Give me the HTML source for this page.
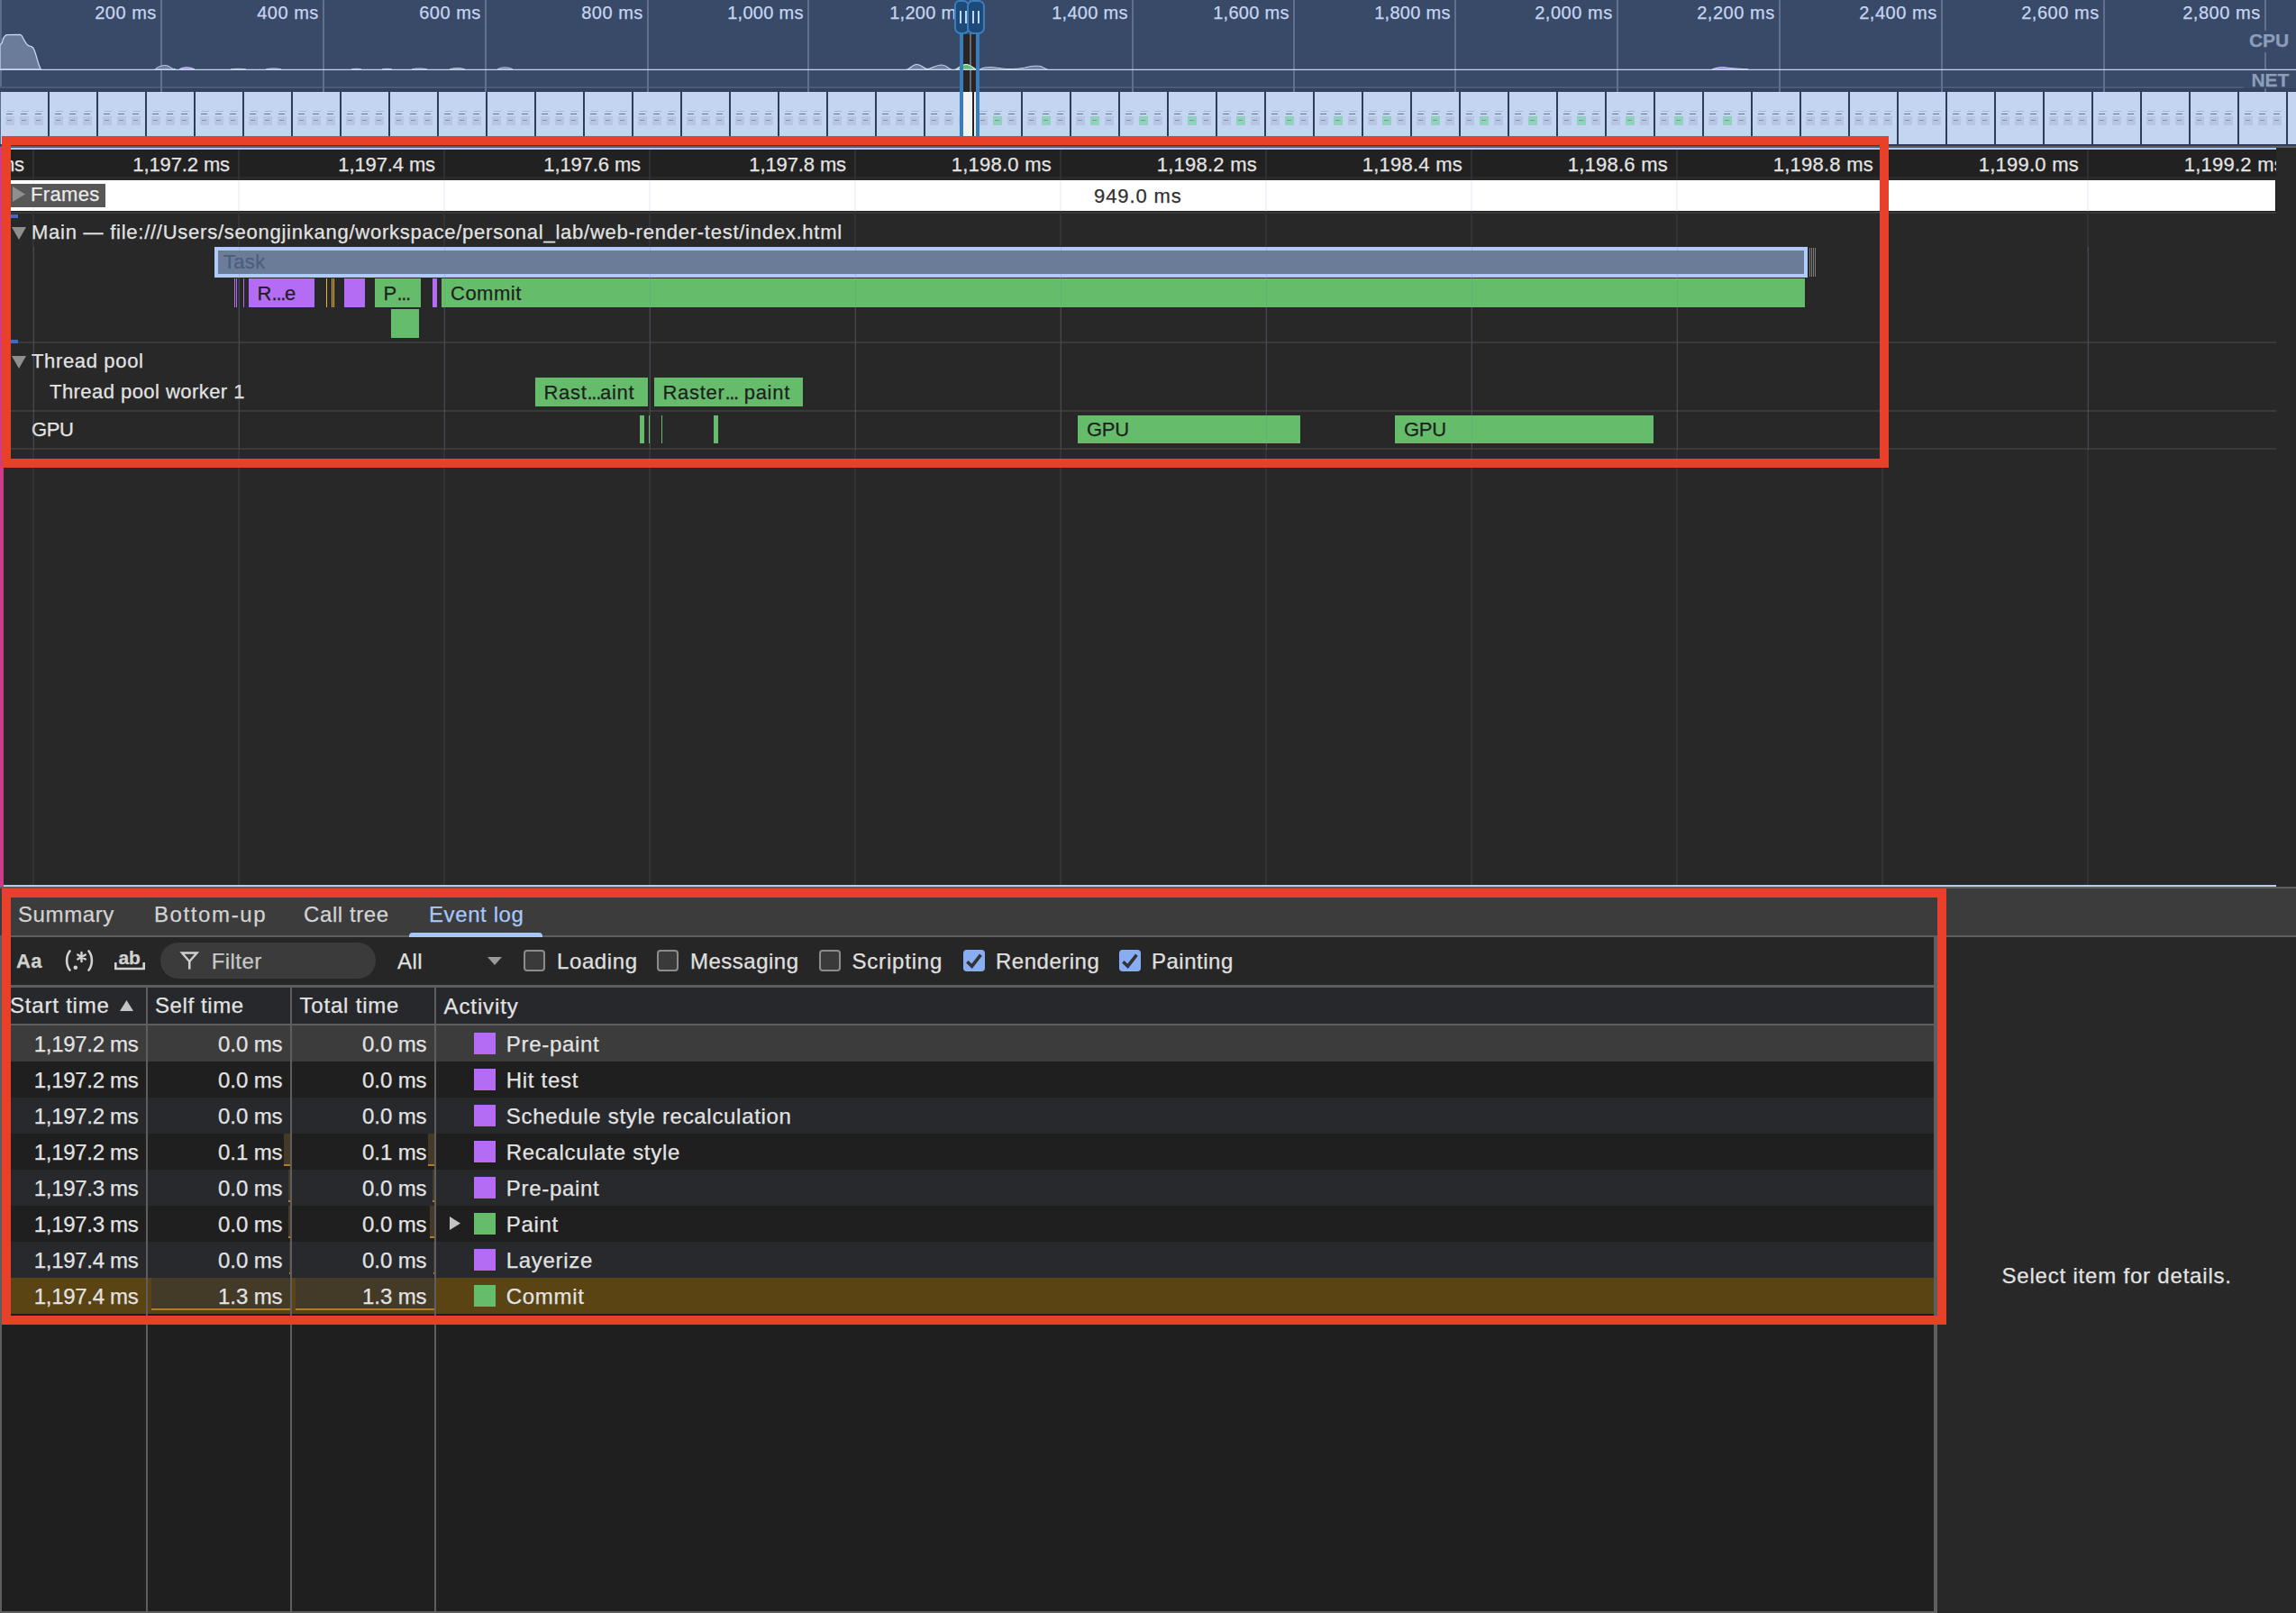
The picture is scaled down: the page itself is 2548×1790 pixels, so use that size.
<!DOCTYPE html>
<html><head><meta charset="utf-8"><style>
html,body{margin:0;padding:0;}
body{width:2548px;height:1790px;position:relative;overflow:hidden;background:#282828;font-family:"Liberation Sans", sans-serif;}
body div, body span, body svg{position:absolute;}
span{white-space:nowrap;-webkit-text-stroke:0.25px currentColor;}
body span.e{position:static;letter-spacing:-1.3px;}
</style></head><body>
<div style="left:0px;top:0px;width:2548px;height:102px;background:#384a68;"></div>
<div style="left:0px;top:0px;width:2px;height:102px;background:#5a6d8c;"></div>
<span style="top:4.07px;font-size:20px;line-height:20px;color:#c7d5f1;letter-spacing:0.5px;right:2374.2px;text-align:right;">200 ms</span>
<span style="top:4.07px;font-size:20px;line-height:20px;color:#c7d5f1;letter-spacing:0.5px;right:2194.2px;text-align:right;">400 ms</span>
<span style="top:4.07px;font-size:20px;line-height:20px;color:#c7d5f1;letter-spacing:0.5px;right:2014.2px;text-align:right;">600 ms</span>
<span style="top:4.07px;font-size:20px;line-height:20px;color:#c7d5f1;letter-spacing:0.5px;right:1834.2px;text-align:right;">800 ms</span>
<span style="top:4.07px;font-size:20px;line-height:20px;color:#c7d5f1;letter-spacing:0.3px;right:1656.2px;text-align:right;">1,000 ms</span>
<span style="top:4.07px;font-size:20px;line-height:20px;color:#c7d5f1;letter-spacing:0.3px;right:1476.2px;text-align:right;">1,200 ms</span>
<span style="top:4.07px;font-size:20px;line-height:20px;color:#c7d5f1;letter-spacing:0.3px;right:1296.2px;text-align:right;">1,400 ms</span>
<span style="top:4.07px;font-size:20px;line-height:20px;color:#c7d5f1;letter-spacing:0.3px;right:1117.2px;text-align:right;">1,600 ms</span>
<span style="top:4.07px;font-size:20px;line-height:20px;color:#c7d5f1;letter-spacing:0.3px;right:938.2px;text-align:right;">1,800 ms</span>
<span style="top:4.07px;font-size:20px;line-height:20px;color:#c7d5f1;letter-spacing:0.55px;right:758.2px;text-align:right;">2,000 ms</span>
<span style="top:4.07px;font-size:20px;line-height:20px;color:#c7d5f1;letter-spacing:0.55px;right:578.2px;text-align:right;">2,200 ms</span>
<span style="top:4.07px;font-size:20px;line-height:20px;color:#c7d5f1;letter-spacing:0.55px;right:398.1999999999998px;text-align:right;">2,400 ms</span>
<span style="top:4.07px;font-size:20px;line-height:20px;color:#c7d5f1;letter-spacing:0.55px;right:218.19999999999982px;text-align:right;">2,600 ms</span>
<span style="top:4.07px;font-size:20px;line-height:20px;color:#c7d5f1;letter-spacing:0.55px;right:39.19999999999982px;text-align:right;">2,800 ms</span>
<div style="left:0px;top:96px;width:2490px;height:2px;background:#4a5a78;"></div>
<div style="left:0px;top:98px;width:2548px;height:4px;background:#33435f;"></div>
<div style="left:178px;top:0px;width:2px;height:102px;background:#5f7091;"></div>
<div style="left:358px;top:0px;width:2px;height:102px;background:#5f7091;"></div>
<div style="left:538px;top:0px;width:2px;height:102px;background:#5f7091;"></div>
<div style="left:718px;top:0px;width:2px;height:102px;background:#5f7091;"></div>
<div style="left:896px;top:0px;width:2px;height:102px;background:#5f7091;"></div>
<div style="left:1076px;top:0px;width:2px;height:102px;background:#5f7091;"></div>
<div style="left:1256px;top:0px;width:2px;height:102px;background:#5f7091;"></div>
<div style="left:1435px;top:0px;width:2px;height:102px;background:#5f7091;"></div>
<div style="left:1614px;top:0px;width:2px;height:102px;background:#5f7091;"></div>
<div style="left:1794px;top:0px;width:2px;height:102px;background:#5f7091;"></div>
<div style="left:1974px;top:0px;width:2px;height:102px;background:#5f7091;"></div>
<div style="left:2154px;top:0px;width:2px;height:102px;background:#5f7091;"></div>
<div style="left:2334px;top:0px;width:2px;height:102px;background:#5f7091;"></div>
<div style="left:2513px;top:0px;width:2px;height:102px;background:#5f7091;"></div>
<div style="left:1069px;top:38px;width:14px;height:64px;background:#262626;"></div>
<div style="left:1076px;top:38px;width:2px;height:64px;background:#6a6a6a;"></div>
<svg style="left:0;top:0" width="2548" height="102" viewBox="0 0 2548 102">
<path d="M0,77 L0,50 L2.4,47.4 C3,43 4,40.5 7.3,38.6 L22.3,38.4 C24,39 25,40.8 26,43 C27,45 28,47 30.3,49.9 C32,51 33.5,51.3 34.8,51.6 C36.5,52.3 37.3,53.5 38,55.5 C39,58 40.5,63 41.5,66.6 C42.3,69.5 43.5,73.5 45.3,77 Z" fill="#6b7b9a" stroke="#c9d5ee" stroke-width="1.3"/>
<path d="M172,77 C176,73 182,72 186,73 C189,74 191,77 195,77 Z" fill="#6b7b9a" stroke="#c9d5ee" stroke-width="1"/>
<path d="M199,77 C203,74 211,74 216,77 Z" fill="#9a7ef0" stroke="#c9d5ee" stroke-width="1"/>
<path d="M1006,77.4 C1010,77 1012,71.5 1017.5,71.5 C1023,71.5 1025,76.5 1029,76.5 C1034,76.5 1038,72 1045,72 C1051,72 1053,77 1056,77.4 Z" fill="#6b7b9a" stroke="#c9d5ee" stroke-width="1.2"/>
<path d="M1060,77.4 C1064,76 1066,71.5 1072,71.5 C1077,71.5 1080,75 1083,77.4 Z" fill="#64bd6c" stroke="#e8eefa" stroke-width="1.2"/>
<path d="M1087,77.4 C1090,75 1094,74.6 1099,74.6 C1105,74.6 1110,76 1117,76.5 C1127,76.8 1135,76 1142,74 C1147,73 1152,73 1155,73.6 C1158,74.5 1160,76.5 1163,77.4 Z" fill="#6b7b9a" stroke="#c9d5ee" stroke-width="1"/>
<path d="M256,77 C260,76 268,76 273,77 Z M295,77 C299,75.5 308,75.5 312,77 Z M390,77 C393,76 398,76 401,77 Z M424,77 C427,76 432,76 435,77 Z M457,77 C461,75.5 470,75.5 474,77 Z M499,77 C503,75 512,75 516,77 Z M552,77 C556,74 565,74 569,77 Z" fill="#6b7b9a" stroke="#c9d5ee" stroke-width="0.8"/>
<path d="M1900,77 C1904,75 1910,74 1916,75 C1922,76 1930,76 1940,77 Z" fill="#9a7ef0" stroke="#c9d5ee" stroke-width="1"/>
<path d="M0,77.4 L2548,77.4" stroke="#c5d2ec" stroke-width="1.3"/>
</svg>
<div style="left:2490px;top:34px;width:58px;height:24px;background:#384a68;"></div>
<span style="top:34.42px;font-size:21px;line-height:21px;color:#8d9dba;letter-spacing:-0.1px;font-weight:700;left:2496px;">CPU</span>
<div style="left:2490px;top:78px;width:58px;height:20px;background:#384a68;"></div>
<span style="top:78.02px;font-size:21px;line-height:21px;color:#8d9dba;letter-spacing:-0.1px;font-weight:700;left:2498.5px;">NET</span>
<div style="left:0px;top:102px;width:2548px;height:58px;background:#2d3e5d;"></div>
<div style="left:0px;top:102px;width:1px;height:58px;background:#5a6d8c;"></div>
<div style="left:1px;top:102px;width:52px;height:58px;background:#c4d5f1;"></div>
<div style="left:8px;top:123px;width:8px;height:1px;background:#a9b6cf;"></div>
<div style="left:7px;top:126px;width:7px;height:1px;background:#6a768e;"></div>
<div style="left:6px;top:129px;width:10px;height:10px;background:#b7c7e3;"></div>
<div style="left:8px;top:133px;width:5px;height:1px;background:#8591ab;"></div>
<div style="left:24px;top:123px;width:8px;height:1px;background:#a9b6cf;"></div>
<div style="left:23px;top:126px;width:7px;height:1px;background:#6a768e;"></div>
<div style="left:22px;top:129px;width:10px;height:10px;background:#b7c7e3;"></div>
<div style="left:24px;top:133px;width:5px;height:1px;background:#8591ab;"></div>
<div style="left:40px;top:123px;width:8px;height:1px;background:#a9b6cf;"></div>
<div style="left:39px;top:126px;width:7px;height:1px;background:#6a768e;"></div>
<div style="left:38px;top:129px;width:10px;height:10px;background:#b7c7e3;"></div>
<div style="left:40px;top:133px;width:5px;height:1px;background:#8591ab;"></div>
<div style="left:55px;top:102px;width:52px;height:58px;background:#c4d5f1;"></div>
<div style="left:62px;top:123px;width:8px;height:1px;background:#a9b6cf;"></div>
<div style="left:61px;top:126px;width:7px;height:1px;background:#6a768e;"></div>
<div style="left:60px;top:129px;width:10px;height:10px;background:#b7c7e3;"></div>
<div style="left:62px;top:133px;width:5px;height:1px;background:#8591ab;"></div>
<div style="left:78px;top:123px;width:8px;height:1px;background:#a9b6cf;"></div>
<div style="left:77px;top:126px;width:7px;height:1px;background:#6a768e;"></div>
<div style="left:76px;top:129px;width:10px;height:10px;background:#b7c7e3;"></div>
<div style="left:78px;top:133px;width:5px;height:1px;background:#8591ab;"></div>
<div style="left:94px;top:123px;width:8px;height:1px;background:#a9b6cf;"></div>
<div style="left:93px;top:126px;width:7px;height:1px;background:#6a768e;"></div>
<div style="left:92px;top:129px;width:10px;height:10px;background:#b7c7e3;"></div>
<div style="left:94px;top:133px;width:5px;height:1px;background:#8591ab;"></div>
<div style="left:109px;top:102px;width:52px;height:58px;background:#c4d5f1;"></div>
<div style="left:116px;top:123px;width:8px;height:1px;background:#a9b6cf;"></div>
<div style="left:115px;top:126px;width:7px;height:1px;background:#6a768e;"></div>
<div style="left:114px;top:129px;width:10px;height:10px;background:#b7c7e3;"></div>
<div style="left:116px;top:133px;width:5px;height:1px;background:#8591ab;"></div>
<div style="left:132px;top:123px;width:8px;height:1px;background:#a9b6cf;"></div>
<div style="left:131px;top:126px;width:7px;height:1px;background:#6a768e;"></div>
<div style="left:130px;top:129px;width:10px;height:10px;background:#b7c7e3;"></div>
<div style="left:132px;top:133px;width:5px;height:1px;background:#8591ab;"></div>
<div style="left:148px;top:123px;width:8px;height:1px;background:#a9b6cf;"></div>
<div style="left:147px;top:126px;width:7px;height:1px;background:#6a768e;"></div>
<div style="left:146px;top:129px;width:10px;height:10px;background:#b7c7e3;"></div>
<div style="left:148px;top:133px;width:5px;height:1px;background:#8591ab;"></div>
<div style="left:163px;top:102px;width:52px;height:58px;background:#c4d5f1;"></div>
<div style="left:170px;top:123px;width:8px;height:1px;background:#a9b6cf;"></div>
<div style="left:169px;top:126px;width:7px;height:1px;background:#6a768e;"></div>
<div style="left:168px;top:129px;width:10px;height:10px;background:#b7c7e3;"></div>
<div style="left:170px;top:133px;width:5px;height:1px;background:#8591ab;"></div>
<div style="left:186px;top:123px;width:8px;height:1px;background:#a9b6cf;"></div>
<div style="left:185px;top:126px;width:7px;height:1px;background:#6a768e;"></div>
<div style="left:184px;top:129px;width:10px;height:10px;background:#b7c7e3;"></div>
<div style="left:186px;top:133px;width:5px;height:1px;background:#8591ab;"></div>
<div style="left:202px;top:123px;width:8px;height:1px;background:#a9b6cf;"></div>
<div style="left:201px;top:126px;width:7px;height:1px;background:#6a768e;"></div>
<div style="left:200px;top:129px;width:10px;height:10px;background:#b7c7e3;"></div>
<div style="left:202px;top:133px;width:5px;height:1px;background:#8591ab;"></div>
<div style="left:217px;top:102px;width:52px;height:58px;background:#c4d5f1;"></div>
<div style="left:224px;top:123px;width:8px;height:1px;background:#a9b6cf;"></div>
<div style="left:223px;top:126px;width:7px;height:1px;background:#6a768e;"></div>
<div style="left:222px;top:129px;width:10px;height:10px;background:#b7c7e3;"></div>
<div style="left:224px;top:133px;width:5px;height:1px;background:#8591ab;"></div>
<div style="left:240px;top:123px;width:8px;height:1px;background:#a9b6cf;"></div>
<div style="left:239px;top:126px;width:7px;height:1px;background:#6a768e;"></div>
<div style="left:238px;top:129px;width:10px;height:10px;background:#b7c7e3;"></div>
<div style="left:240px;top:133px;width:5px;height:1px;background:#8591ab;"></div>
<div style="left:256px;top:123px;width:8px;height:1px;background:#a9b6cf;"></div>
<div style="left:255px;top:126px;width:7px;height:1px;background:#6a768e;"></div>
<div style="left:254px;top:129px;width:10px;height:10px;background:#b7c7e3;"></div>
<div style="left:256px;top:133px;width:5px;height:1px;background:#8591ab;"></div>
<div style="left:271px;top:102px;width:52px;height:58px;background:#c4d5f1;"></div>
<div style="left:278px;top:123px;width:8px;height:1px;background:#a9b6cf;"></div>
<div style="left:277px;top:126px;width:7px;height:1px;background:#6a768e;"></div>
<div style="left:276px;top:129px;width:10px;height:10px;background:#b7c7e3;"></div>
<div style="left:278px;top:133px;width:5px;height:1px;background:#8591ab;"></div>
<div style="left:294px;top:123px;width:8px;height:1px;background:#a9b6cf;"></div>
<div style="left:293px;top:126px;width:7px;height:1px;background:#6a768e;"></div>
<div style="left:292px;top:129px;width:10px;height:10px;background:#b7c7e3;"></div>
<div style="left:294px;top:133px;width:5px;height:1px;background:#8591ab;"></div>
<div style="left:310px;top:123px;width:8px;height:1px;background:#a9b6cf;"></div>
<div style="left:309px;top:126px;width:7px;height:1px;background:#6a768e;"></div>
<div style="left:308px;top:129px;width:10px;height:10px;background:#b7c7e3;"></div>
<div style="left:310px;top:133px;width:5px;height:1px;background:#8591ab;"></div>
<div style="left:325px;top:102px;width:52px;height:58px;background:#c4d5f1;"></div>
<div style="left:332px;top:123px;width:8px;height:1px;background:#a9b6cf;"></div>
<div style="left:331px;top:126px;width:7px;height:1px;background:#6a768e;"></div>
<div style="left:330px;top:129px;width:10px;height:10px;background:#b7c7e3;"></div>
<div style="left:332px;top:133px;width:5px;height:1px;background:#8591ab;"></div>
<div style="left:348px;top:123px;width:8px;height:1px;background:#a9b6cf;"></div>
<div style="left:347px;top:126px;width:7px;height:1px;background:#6a768e;"></div>
<div style="left:346px;top:129px;width:10px;height:10px;background:#b7c7e3;"></div>
<div style="left:348px;top:133px;width:5px;height:1px;background:#8591ab;"></div>
<div style="left:364px;top:123px;width:8px;height:1px;background:#a9b6cf;"></div>
<div style="left:363px;top:126px;width:7px;height:1px;background:#6a768e;"></div>
<div style="left:362px;top:129px;width:10px;height:10px;background:#b7c7e3;"></div>
<div style="left:364px;top:133px;width:5px;height:1px;background:#8591ab;"></div>
<div style="left:379px;top:102px;width:52px;height:58px;background:#c4d5f1;"></div>
<div style="left:386px;top:123px;width:8px;height:1px;background:#a9b6cf;"></div>
<div style="left:385px;top:126px;width:7px;height:1px;background:#6a768e;"></div>
<div style="left:384px;top:129px;width:10px;height:10px;background:#b7c7e3;"></div>
<div style="left:386px;top:133px;width:5px;height:1px;background:#8591ab;"></div>
<div style="left:402px;top:123px;width:8px;height:1px;background:#a9b6cf;"></div>
<div style="left:401px;top:126px;width:7px;height:1px;background:#6a768e;"></div>
<div style="left:400px;top:129px;width:10px;height:10px;background:#b7c7e3;"></div>
<div style="left:402px;top:133px;width:5px;height:1px;background:#8591ab;"></div>
<div style="left:418px;top:123px;width:8px;height:1px;background:#a9b6cf;"></div>
<div style="left:417px;top:126px;width:7px;height:1px;background:#6a768e;"></div>
<div style="left:416px;top:129px;width:10px;height:10px;background:#b7c7e3;"></div>
<div style="left:418px;top:133px;width:5px;height:1px;background:#8591ab;"></div>
<div style="left:433px;top:102px;width:52px;height:58px;background:#c4d5f1;"></div>
<div style="left:440px;top:123px;width:8px;height:1px;background:#a9b6cf;"></div>
<div style="left:439px;top:126px;width:7px;height:1px;background:#6a768e;"></div>
<div style="left:438px;top:129px;width:10px;height:10px;background:#b7c7e3;"></div>
<div style="left:440px;top:133px;width:5px;height:1px;background:#8591ab;"></div>
<div style="left:456px;top:123px;width:8px;height:1px;background:#a9b6cf;"></div>
<div style="left:455px;top:126px;width:7px;height:1px;background:#6a768e;"></div>
<div style="left:454px;top:129px;width:10px;height:10px;background:#b7c7e3;"></div>
<div style="left:456px;top:133px;width:5px;height:1px;background:#8591ab;"></div>
<div style="left:472px;top:123px;width:8px;height:1px;background:#a9b6cf;"></div>
<div style="left:471px;top:126px;width:7px;height:1px;background:#6a768e;"></div>
<div style="left:470px;top:129px;width:10px;height:10px;background:#b7c7e3;"></div>
<div style="left:472px;top:133px;width:5px;height:1px;background:#8591ab;"></div>
<div style="left:487px;top:102px;width:52px;height:58px;background:#c4d5f1;"></div>
<div style="left:494px;top:123px;width:8px;height:1px;background:#a9b6cf;"></div>
<div style="left:493px;top:126px;width:7px;height:1px;background:#6a768e;"></div>
<div style="left:492px;top:129px;width:10px;height:10px;background:#b7c7e3;"></div>
<div style="left:494px;top:133px;width:5px;height:1px;background:#8591ab;"></div>
<div style="left:510px;top:123px;width:8px;height:1px;background:#a9b6cf;"></div>
<div style="left:509px;top:126px;width:7px;height:1px;background:#6a768e;"></div>
<div style="left:508px;top:129px;width:10px;height:10px;background:#b7c7e3;"></div>
<div style="left:510px;top:133px;width:5px;height:1px;background:#8591ab;"></div>
<div style="left:526px;top:123px;width:8px;height:1px;background:#a9b6cf;"></div>
<div style="left:525px;top:126px;width:7px;height:1px;background:#6a768e;"></div>
<div style="left:524px;top:129px;width:10px;height:10px;background:#b7c7e3;"></div>
<div style="left:526px;top:133px;width:5px;height:1px;background:#8591ab;"></div>
<div style="left:541px;top:102px;width:52px;height:58px;background:#c4d5f1;"></div>
<div style="left:548px;top:123px;width:8px;height:1px;background:#a9b6cf;"></div>
<div style="left:547px;top:126px;width:7px;height:1px;background:#6a768e;"></div>
<div style="left:546px;top:129px;width:10px;height:10px;background:#b7c7e3;"></div>
<div style="left:548px;top:133px;width:5px;height:1px;background:#8591ab;"></div>
<div style="left:564px;top:123px;width:8px;height:1px;background:#a9b6cf;"></div>
<div style="left:563px;top:126px;width:7px;height:1px;background:#6a768e;"></div>
<div style="left:562px;top:129px;width:10px;height:10px;background:#b7c7e3;"></div>
<div style="left:564px;top:133px;width:5px;height:1px;background:#8591ab;"></div>
<div style="left:580px;top:123px;width:8px;height:1px;background:#a9b6cf;"></div>
<div style="left:579px;top:126px;width:7px;height:1px;background:#6a768e;"></div>
<div style="left:578px;top:129px;width:10px;height:10px;background:#b7c7e3;"></div>
<div style="left:580px;top:133px;width:5px;height:1px;background:#8591ab;"></div>
<div style="left:595px;top:102px;width:52px;height:58px;background:#c4d5f1;"></div>
<div style="left:602px;top:123px;width:8px;height:1px;background:#a9b6cf;"></div>
<div style="left:601px;top:126px;width:7px;height:1px;background:#6a768e;"></div>
<div style="left:600px;top:129px;width:10px;height:10px;background:#b7c7e3;"></div>
<div style="left:602px;top:133px;width:5px;height:1px;background:#8591ab;"></div>
<div style="left:618px;top:123px;width:8px;height:1px;background:#a9b6cf;"></div>
<div style="left:617px;top:126px;width:7px;height:1px;background:#6a768e;"></div>
<div style="left:616px;top:129px;width:10px;height:10px;background:#b7c7e3;"></div>
<div style="left:618px;top:133px;width:5px;height:1px;background:#8591ab;"></div>
<div style="left:634px;top:123px;width:8px;height:1px;background:#a9b6cf;"></div>
<div style="left:633px;top:126px;width:7px;height:1px;background:#6a768e;"></div>
<div style="left:632px;top:129px;width:10px;height:10px;background:#b7c7e3;"></div>
<div style="left:634px;top:133px;width:5px;height:1px;background:#8591ab;"></div>
<div style="left:649px;top:102px;width:52px;height:58px;background:#c4d5f1;"></div>
<div style="left:656px;top:123px;width:8px;height:1px;background:#a9b6cf;"></div>
<div style="left:655px;top:126px;width:7px;height:1px;background:#6a768e;"></div>
<div style="left:654px;top:129px;width:10px;height:10px;background:#b7c7e3;"></div>
<div style="left:656px;top:133px;width:5px;height:1px;background:#8591ab;"></div>
<div style="left:672px;top:123px;width:8px;height:1px;background:#a9b6cf;"></div>
<div style="left:671px;top:126px;width:7px;height:1px;background:#6a768e;"></div>
<div style="left:670px;top:129px;width:10px;height:10px;background:#b7c7e3;"></div>
<div style="left:672px;top:133px;width:5px;height:1px;background:#8591ab;"></div>
<div style="left:688px;top:123px;width:8px;height:1px;background:#a9b6cf;"></div>
<div style="left:687px;top:126px;width:7px;height:1px;background:#6a768e;"></div>
<div style="left:686px;top:129px;width:10px;height:10px;background:#b7c7e3;"></div>
<div style="left:688px;top:133px;width:5px;height:1px;background:#8591ab;"></div>
<div style="left:703px;top:102px;width:52px;height:58px;background:#c4d5f1;"></div>
<div style="left:710px;top:123px;width:8px;height:1px;background:#a9b6cf;"></div>
<div style="left:709px;top:126px;width:7px;height:1px;background:#6a768e;"></div>
<div style="left:708px;top:129px;width:10px;height:10px;background:#b7c7e3;"></div>
<div style="left:710px;top:133px;width:5px;height:1px;background:#8591ab;"></div>
<div style="left:726px;top:123px;width:8px;height:1px;background:#a9b6cf;"></div>
<div style="left:725px;top:126px;width:7px;height:1px;background:#6a768e;"></div>
<div style="left:724px;top:129px;width:10px;height:10px;background:#b7c7e3;"></div>
<div style="left:726px;top:133px;width:5px;height:1px;background:#8591ab;"></div>
<div style="left:742px;top:123px;width:8px;height:1px;background:#a9b6cf;"></div>
<div style="left:741px;top:126px;width:7px;height:1px;background:#6a768e;"></div>
<div style="left:740px;top:129px;width:10px;height:10px;background:#b7c7e3;"></div>
<div style="left:742px;top:133px;width:5px;height:1px;background:#8591ab;"></div>
<div style="left:757px;top:102px;width:52px;height:58px;background:#c4d5f1;"></div>
<div style="left:764px;top:123px;width:8px;height:1px;background:#a9b6cf;"></div>
<div style="left:763px;top:126px;width:7px;height:1px;background:#6a768e;"></div>
<div style="left:762px;top:129px;width:10px;height:10px;background:#b7c7e3;"></div>
<div style="left:764px;top:133px;width:5px;height:1px;background:#8591ab;"></div>
<div style="left:780px;top:123px;width:8px;height:1px;background:#a9b6cf;"></div>
<div style="left:779px;top:126px;width:7px;height:1px;background:#6a768e;"></div>
<div style="left:778px;top:129px;width:10px;height:10px;background:#b7c7e3;"></div>
<div style="left:780px;top:133px;width:5px;height:1px;background:#8591ab;"></div>
<div style="left:796px;top:123px;width:8px;height:1px;background:#a9b6cf;"></div>
<div style="left:795px;top:126px;width:7px;height:1px;background:#6a768e;"></div>
<div style="left:794px;top:129px;width:10px;height:10px;background:#b7c7e3;"></div>
<div style="left:796px;top:133px;width:5px;height:1px;background:#8591ab;"></div>
<div style="left:811px;top:102px;width:52px;height:58px;background:#c4d5f1;"></div>
<div style="left:818px;top:123px;width:8px;height:1px;background:#a9b6cf;"></div>
<div style="left:817px;top:126px;width:7px;height:1px;background:#6a768e;"></div>
<div style="left:816px;top:129px;width:10px;height:10px;background:#b7c7e3;"></div>
<div style="left:818px;top:133px;width:5px;height:1px;background:#8591ab;"></div>
<div style="left:834px;top:123px;width:8px;height:1px;background:#a9b6cf;"></div>
<div style="left:833px;top:126px;width:7px;height:1px;background:#6a768e;"></div>
<div style="left:832px;top:129px;width:10px;height:10px;background:#b7c7e3;"></div>
<div style="left:834px;top:133px;width:5px;height:1px;background:#8591ab;"></div>
<div style="left:850px;top:123px;width:8px;height:1px;background:#a9b6cf;"></div>
<div style="left:849px;top:126px;width:7px;height:1px;background:#6a768e;"></div>
<div style="left:848px;top:129px;width:10px;height:10px;background:#b7c7e3;"></div>
<div style="left:850px;top:133px;width:5px;height:1px;background:#8591ab;"></div>
<div style="left:865px;top:102px;width:52px;height:58px;background:#c4d5f1;"></div>
<div style="left:872px;top:123px;width:8px;height:1px;background:#a9b6cf;"></div>
<div style="left:871px;top:126px;width:7px;height:1px;background:#6a768e;"></div>
<div style="left:870px;top:129px;width:10px;height:10px;background:#b7c7e3;"></div>
<div style="left:872px;top:133px;width:5px;height:1px;background:#8591ab;"></div>
<div style="left:888px;top:123px;width:8px;height:1px;background:#a9b6cf;"></div>
<div style="left:887px;top:126px;width:7px;height:1px;background:#6a768e;"></div>
<div style="left:886px;top:129px;width:10px;height:10px;background:#b7c7e3;"></div>
<div style="left:888px;top:133px;width:5px;height:1px;background:#8591ab;"></div>
<div style="left:904px;top:123px;width:8px;height:1px;background:#a9b6cf;"></div>
<div style="left:903px;top:126px;width:7px;height:1px;background:#6a768e;"></div>
<div style="left:902px;top:129px;width:10px;height:10px;background:#b7c7e3;"></div>
<div style="left:904px;top:133px;width:5px;height:1px;background:#8591ab;"></div>
<div style="left:919px;top:102px;width:52px;height:58px;background:#c4d5f1;"></div>
<div style="left:926px;top:123px;width:8px;height:1px;background:#a9b6cf;"></div>
<div style="left:925px;top:126px;width:7px;height:1px;background:#6a768e;"></div>
<div style="left:924px;top:129px;width:10px;height:10px;background:#b7c7e3;"></div>
<div style="left:926px;top:133px;width:5px;height:1px;background:#8591ab;"></div>
<div style="left:942px;top:123px;width:8px;height:1px;background:#a9b6cf;"></div>
<div style="left:941px;top:126px;width:7px;height:1px;background:#6a768e;"></div>
<div style="left:940px;top:129px;width:10px;height:10px;background:#b7c7e3;"></div>
<div style="left:942px;top:133px;width:5px;height:1px;background:#8591ab;"></div>
<div style="left:958px;top:123px;width:8px;height:1px;background:#a9b6cf;"></div>
<div style="left:957px;top:126px;width:7px;height:1px;background:#6a768e;"></div>
<div style="left:956px;top:129px;width:10px;height:10px;background:#b7c7e3;"></div>
<div style="left:958px;top:133px;width:5px;height:1px;background:#8591ab;"></div>
<div style="left:973px;top:102px;width:52px;height:58px;background:#c4d5f1;"></div>
<div style="left:980px;top:123px;width:8px;height:1px;background:#a9b6cf;"></div>
<div style="left:979px;top:126px;width:7px;height:1px;background:#6a768e;"></div>
<div style="left:978px;top:129px;width:10px;height:10px;background:#b7c7e3;"></div>
<div style="left:980px;top:133px;width:5px;height:1px;background:#8591ab;"></div>
<div style="left:996px;top:123px;width:8px;height:1px;background:#a9b6cf;"></div>
<div style="left:995px;top:126px;width:7px;height:1px;background:#6a768e;"></div>
<div style="left:994px;top:129px;width:10px;height:10px;background:#b7c7e3;"></div>
<div style="left:996px;top:133px;width:5px;height:1px;background:#8591ab;"></div>
<div style="left:1012px;top:123px;width:8px;height:1px;background:#a9b6cf;"></div>
<div style="left:1011px;top:126px;width:7px;height:1px;background:#6a768e;"></div>
<div style="left:1010px;top:129px;width:10px;height:10px;background:#b7c7e3;"></div>
<div style="left:1012px;top:133px;width:5px;height:1px;background:#8591ab;"></div>
<div style="left:1027px;top:102px;width:52px;height:58px;background:#c4d5f1;"></div>
<div style="left:1034px;top:123px;width:8px;height:1px;background:#a9b6cf;"></div>
<div style="left:1033px;top:126px;width:7px;height:1px;background:#6a768e;"></div>
<div style="left:1032px;top:129px;width:10px;height:10px;background:#b7c7e3;"></div>
<div style="left:1034px;top:133px;width:5px;height:1px;background:#8591ab;"></div>
<div style="left:1050px;top:123px;width:8px;height:1px;background:#a9b6cf;"></div>
<div style="left:1049px;top:126px;width:7px;height:1px;background:#6a768e;"></div>
<div style="left:1048px;top:129px;width:10px;height:10px;background:#b7c7e3;"></div>
<div style="left:1050px;top:133px;width:5px;height:1px;background:#8591ab;"></div>
<div style="left:1066px;top:123px;width:8px;height:1px;background:#a9b6cf;"></div>
<div style="left:1065px;top:126px;width:7px;height:1px;background:#6a768e;"></div>
<div style="left:1064px;top:129px;width:10px;height:10px;background:#b7c7e3;"></div>
<div style="left:1066px;top:133px;width:5px;height:1px;background:#8591ab;"></div>
<div style="left:1081px;top:102px;width:52px;height:58px;background:#c4d5f1;"></div>
<div style="left:1088px;top:123px;width:8px;height:1px;background:#a9b6cf;"></div>
<div style="left:1087px;top:126px;width:7px;height:1px;background:#6a768e;"></div>
<div style="left:1086px;top:129px;width:10px;height:10px;background:#b7c7e3;"></div>
<div style="left:1088px;top:133px;width:5px;height:1px;background:#8591ab;"></div>
<div style="left:1104px;top:123px;width:8px;height:1px;background:#a9b6cf;"></div>
<div style="left:1103px;top:126px;width:7px;height:1px;background:#6a768e;"></div>
<div style="left:1102px;top:129px;width:10px;height:10px;background:#8fd3bd;"></div>
<div style="left:1104px;top:133px;width:5px;height:1px;background:#8591ab;"></div>
<div style="left:1120px;top:123px;width:8px;height:1px;background:#a9b6cf;"></div>
<div style="left:1119px;top:126px;width:7px;height:1px;background:#6a768e;"></div>
<div style="left:1118px;top:129px;width:10px;height:10px;background:#b7c7e3;"></div>
<div style="left:1120px;top:133px;width:5px;height:1px;background:#8591ab;"></div>
<div style="left:1135px;top:102px;width:52px;height:58px;background:#c4d5f1;"></div>
<div style="left:1142px;top:123px;width:8px;height:1px;background:#a9b6cf;"></div>
<div style="left:1141px;top:126px;width:7px;height:1px;background:#6a768e;"></div>
<div style="left:1140px;top:129px;width:10px;height:10px;background:#b7c7e3;"></div>
<div style="left:1142px;top:133px;width:5px;height:1px;background:#8591ab;"></div>
<div style="left:1158px;top:123px;width:8px;height:1px;background:#a9b6cf;"></div>
<div style="left:1157px;top:126px;width:7px;height:1px;background:#6a768e;"></div>
<div style="left:1156px;top:129px;width:10px;height:10px;background:#8fd3bd;"></div>
<div style="left:1158px;top:133px;width:5px;height:1px;background:#8591ab;"></div>
<div style="left:1174px;top:123px;width:8px;height:1px;background:#a9b6cf;"></div>
<div style="left:1173px;top:126px;width:7px;height:1px;background:#6a768e;"></div>
<div style="left:1172px;top:129px;width:10px;height:10px;background:#b7c7e3;"></div>
<div style="left:1174px;top:133px;width:5px;height:1px;background:#8591ab;"></div>
<div style="left:1189px;top:102px;width:52px;height:58px;background:#c4d5f1;"></div>
<div style="left:1196px;top:123px;width:8px;height:1px;background:#a9b6cf;"></div>
<div style="left:1195px;top:126px;width:7px;height:1px;background:#6a768e;"></div>
<div style="left:1194px;top:129px;width:10px;height:10px;background:#b7c7e3;"></div>
<div style="left:1196px;top:133px;width:5px;height:1px;background:#8591ab;"></div>
<div style="left:1212px;top:123px;width:8px;height:1px;background:#a9b6cf;"></div>
<div style="left:1211px;top:126px;width:7px;height:1px;background:#6a768e;"></div>
<div style="left:1210px;top:129px;width:10px;height:10px;background:#8fd3bd;"></div>
<div style="left:1212px;top:133px;width:5px;height:1px;background:#8591ab;"></div>
<div style="left:1228px;top:123px;width:8px;height:1px;background:#a9b6cf;"></div>
<div style="left:1227px;top:126px;width:7px;height:1px;background:#6a768e;"></div>
<div style="left:1226px;top:129px;width:10px;height:10px;background:#b7c7e3;"></div>
<div style="left:1228px;top:133px;width:5px;height:1px;background:#8591ab;"></div>
<div style="left:1243px;top:102px;width:52px;height:58px;background:#c4d5f1;"></div>
<div style="left:1250px;top:123px;width:8px;height:1px;background:#a9b6cf;"></div>
<div style="left:1249px;top:126px;width:7px;height:1px;background:#6a768e;"></div>
<div style="left:1248px;top:129px;width:10px;height:10px;background:#b7c7e3;"></div>
<div style="left:1250px;top:133px;width:5px;height:1px;background:#8591ab;"></div>
<div style="left:1266px;top:123px;width:8px;height:1px;background:#a9b6cf;"></div>
<div style="left:1265px;top:126px;width:7px;height:1px;background:#6a768e;"></div>
<div style="left:1264px;top:129px;width:10px;height:10px;background:#8fd3bd;"></div>
<div style="left:1266px;top:133px;width:5px;height:1px;background:#8591ab;"></div>
<div style="left:1282px;top:123px;width:8px;height:1px;background:#a9b6cf;"></div>
<div style="left:1281px;top:126px;width:7px;height:1px;background:#6a768e;"></div>
<div style="left:1280px;top:129px;width:10px;height:10px;background:#b7c7e3;"></div>
<div style="left:1282px;top:133px;width:5px;height:1px;background:#8591ab;"></div>
<div style="left:1297px;top:102px;width:52px;height:58px;background:#c4d5f1;"></div>
<div style="left:1304px;top:123px;width:8px;height:1px;background:#a9b6cf;"></div>
<div style="left:1303px;top:126px;width:7px;height:1px;background:#6a768e;"></div>
<div style="left:1302px;top:129px;width:10px;height:10px;background:#b7c7e3;"></div>
<div style="left:1304px;top:133px;width:5px;height:1px;background:#8591ab;"></div>
<div style="left:1320px;top:123px;width:8px;height:1px;background:#a9b6cf;"></div>
<div style="left:1319px;top:126px;width:7px;height:1px;background:#6a768e;"></div>
<div style="left:1318px;top:129px;width:10px;height:10px;background:#8fd3bd;"></div>
<div style="left:1320px;top:133px;width:5px;height:1px;background:#8591ab;"></div>
<div style="left:1336px;top:123px;width:8px;height:1px;background:#a9b6cf;"></div>
<div style="left:1335px;top:126px;width:7px;height:1px;background:#6a768e;"></div>
<div style="left:1334px;top:129px;width:10px;height:10px;background:#b7c7e3;"></div>
<div style="left:1336px;top:133px;width:5px;height:1px;background:#8591ab;"></div>
<div style="left:1351px;top:102px;width:52px;height:58px;background:#c4d5f1;"></div>
<div style="left:1358px;top:123px;width:8px;height:1px;background:#a9b6cf;"></div>
<div style="left:1357px;top:126px;width:7px;height:1px;background:#6a768e;"></div>
<div style="left:1356px;top:129px;width:10px;height:10px;background:#b7c7e3;"></div>
<div style="left:1358px;top:133px;width:5px;height:1px;background:#8591ab;"></div>
<div style="left:1374px;top:123px;width:8px;height:1px;background:#a9b6cf;"></div>
<div style="left:1373px;top:126px;width:7px;height:1px;background:#6a768e;"></div>
<div style="left:1372px;top:129px;width:10px;height:10px;background:#8fd3bd;"></div>
<div style="left:1374px;top:133px;width:5px;height:1px;background:#8591ab;"></div>
<div style="left:1390px;top:123px;width:8px;height:1px;background:#a9b6cf;"></div>
<div style="left:1389px;top:126px;width:7px;height:1px;background:#6a768e;"></div>
<div style="left:1388px;top:129px;width:10px;height:10px;background:#b7c7e3;"></div>
<div style="left:1390px;top:133px;width:5px;height:1px;background:#8591ab;"></div>
<div style="left:1405px;top:102px;width:52px;height:58px;background:#c4d5f1;"></div>
<div style="left:1412px;top:123px;width:8px;height:1px;background:#a9b6cf;"></div>
<div style="left:1411px;top:126px;width:7px;height:1px;background:#6a768e;"></div>
<div style="left:1410px;top:129px;width:10px;height:10px;background:#b7c7e3;"></div>
<div style="left:1412px;top:133px;width:5px;height:1px;background:#8591ab;"></div>
<div style="left:1428px;top:123px;width:8px;height:1px;background:#a9b6cf;"></div>
<div style="left:1427px;top:126px;width:7px;height:1px;background:#6a768e;"></div>
<div style="left:1426px;top:129px;width:10px;height:10px;background:#8fd3bd;"></div>
<div style="left:1428px;top:133px;width:5px;height:1px;background:#8591ab;"></div>
<div style="left:1444px;top:123px;width:8px;height:1px;background:#a9b6cf;"></div>
<div style="left:1443px;top:126px;width:7px;height:1px;background:#6a768e;"></div>
<div style="left:1442px;top:129px;width:10px;height:10px;background:#b7c7e3;"></div>
<div style="left:1444px;top:133px;width:5px;height:1px;background:#8591ab;"></div>
<div style="left:1459px;top:102px;width:52px;height:58px;background:#c4d5f1;"></div>
<div style="left:1466px;top:123px;width:8px;height:1px;background:#a9b6cf;"></div>
<div style="left:1465px;top:126px;width:7px;height:1px;background:#6a768e;"></div>
<div style="left:1464px;top:129px;width:10px;height:10px;background:#b7c7e3;"></div>
<div style="left:1466px;top:133px;width:5px;height:1px;background:#8591ab;"></div>
<div style="left:1482px;top:123px;width:8px;height:1px;background:#a9b6cf;"></div>
<div style="left:1481px;top:126px;width:7px;height:1px;background:#6a768e;"></div>
<div style="left:1480px;top:129px;width:10px;height:10px;background:#8fd3bd;"></div>
<div style="left:1482px;top:133px;width:5px;height:1px;background:#8591ab;"></div>
<div style="left:1498px;top:123px;width:8px;height:1px;background:#a9b6cf;"></div>
<div style="left:1497px;top:126px;width:7px;height:1px;background:#6a768e;"></div>
<div style="left:1496px;top:129px;width:10px;height:10px;background:#b7c7e3;"></div>
<div style="left:1498px;top:133px;width:5px;height:1px;background:#8591ab;"></div>
<div style="left:1513px;top:102px;width:52px;height:58px;background:#c4d5f1;"></div>
<div style="left:1520px;top:123px;width:8px;height:1px;background:#a9b6cf;"></div>
<div style="left:1519px;top:126px;width:7px;height:1px;background:#6a768e;"></div>
<div style="left:1518px;top:129px;width:10px;height:10px;background:#b7c7e3;"></div>
<div style="left:1520px;top:133px;width:5px;height:1px;background:#8591ab;"></div>
<div style="left:1536px;top:123px;width:8px;height:1px;background:#a9b6cf;"></div>
<div style="left:1535px;top:126px;width:7px;height:1px;background:#6a768e;"></div>
<div style="left:1534px;top:129px;width:10px;height:10px;background:#8fd3bd;"></div>
<div style="left:1536px;top:133px;width:5px;height:1px;background:#8591ab;"></div>
<div style="left:1552px;top:123px;width:8px;height:1px;background:#a9b6cf;"></div>
<div style="left:1551px;top:126px;width:7px;height:1px;background:#6a768e;"></div>
<div style="left:1550px;top:129px;width:10px;height:10px;background:#b7c7e3;"></div>
<div style="left:1552px;top:133px;width:5px;height:1px;background:#8591ab;"></div>
<div style="left:1567px;top:102px;width:52px;height:58px;background:#c4d5f1;"></div>
<div style="left:1574px;top:123px;width:8px;height:1px;background:#a9b6cf;"></div>
<div style="left:1573px;top:126px;width:7px;height:1px;background:#6a768e;"></div>
<div style="left:1572px;top:129px;width:10px;height:10px;background:#b7c7e3;"></div>
<div style="left:1574px;top:133px;width:5px;height:1px;background:#8591ab;"></div>
<div style="left:1590px;top:123px;width:8px;height:1px;background:#a9b6cf;"></div>
<div style="left:1589px;top:126px;width:7px;height:1px;background:#6a768e;"></div>
<div style="left:1588px;top:129px;width:10px;height:10px;background:#8fd3bd;"></div>
<div style="left:1590px;top:133px;width:5px;height:1px;background:#8591ab;"></div>
<div style="left:1606px;top:123px;width:8px;height:1px;background:#a9b6cf;"></div>
<div style="left:1605px;top:126px;width:7px;height:1px;background:#6a768e;"></div>
<div style="left:1604px;top:129px;width:10px;height:10px;background:#b7c7e3;"></div>
<div style="left:1606px;top:133px;width:5px;height:1px;background:#8591ab;"></div>
<div style="left:1621px;top:102px;width:52px;height:58px;background:#c4d5f1;"></div>
<div style="left:1628px;top:123px;width:8px;height:1px;background:#a9b6cf;"></div>
<div style="left:1627px;top:126px;width:7px;height:1px;background:#6a768e;"></div>
<div style="left:1626px;top:129px;width:10px;height:10px;background:#b7c7e3;"></div>
<div style="left:1628px;top:133px;width:5px;height:1px;background:#8591ab;"></div>
<div style="left:1644px;top:123px;width:8px;height:1px;background:#a9b6cf;"></div>
<div style="left:1643px;top:126px;width:7px;height:1px;background:#6a768e;"></div>
<div style="left:1642px;top:129px;width:10px;height:10px;background:#8fd3bd;"></div>
<div style="left:1644px;top:133px;width:5px;height:1px;background:#8591ab;"></div>
<div style="left:1660px;top:123px;width:8px;height:1px;background:#a9b6cf;"></div>
<div style="left:1659px;top:126px;width:7px;height:1px;background:#6a768e;"></div>
<div style="left:1658px;top:129px;width:10px;height:10px;background:#b7c7e3;"></div>
<div style="left:1660px;top:133px;width:5px;height:1px;background:#8591ab;"></div>
<div style="left:1675px;top:102px;width:52px;height:58px;background:#c4d5f1;"></div>
<div style="left:1682px;top:123px;width:8px;height:1px;background:#a9b6cf;"></div>
<div style="left:1681px;top:126px;width:7px;height:1px;background:#6a768e;"></div>
<div style="left:1680px;top:129px;width:10px;height:10px;background:#b7c7e3;"></div>
<div style="left:1682px;top:133px;width:5px;height:1px;background:#8591ab;"></div>
<div style="left:1698px;top:123px;width:8px;height:1px;background:#a9b6cf;"></div>
<div style="left:1697px;top:126px;width:7px;height:1px;background:#6a768e;"></div>
<div style="left:1696px;top:129px;width:10px;height:10px;background:#8fd3bd;"></div>
<div style="left:1698px;top:133px;width:5px;height:1px;background:#8591ab;"></div>
<div style="left:1714px;top:123px;width:8px;height:1px;background:#a9b6cf;"></div>
<div style="left:1713px;top:126px;width:7px;height:1px;background:#6a768e;"></div>
<div style="left:1712px;top:129px;width:10px;height:10px;background:#b7c7e3;"></div>
<div style="left:1714px;top:133px;width:5px;height:1px;background:#8591ab;"></div>
<div style="left:1729px;top:102px;width:52px;height:58px;background:#c4d5f1;"></div>
<div style="left:1736px;top:123px;width:8px;height:1px;background:#a9b6cf;"></div>
<div style="left:1735px;top:126px;width:7px;height:1px;background:#6a768e;"></div>
<div style="left:1734px;top:129px;width:10px;height:10px;background:#b7c7e3;"></div>
<div style="left:1736px;top:133px;width:5px;height:1px;background:#8591ab;"></div>
<div style="left:1752px;top:123px;width:8px;height:1px;background:#a9b6cf;"></div>
<div style="left:1751px;top:126px;width:7px;height:1px;background:#6a768e;"></div>
<div style="left:1750px;top:129px;width:10px;height:10px;background:#8fd3bd;"></div>
<div style="left:1752px;top:133px;width:5px;height:1px;background:#8591ab;"></div>
<div style="left:1768px;top:123px;width:8px;height:1px;background:#a9b6cf;"></div>
<div style="left:1767px;top:126px;width:7px;height:1px;background:#6a768e;"></div>
<div style="left:1766px;top:129px;width:10px;height:10px;background:#b7c7e3;"></div>
<div style="left:1768px;top:133px;width:5px;height:1px;background:#8591ab;"></div>
<div style="left:1783px;top:102px;width:52px;height:58px;background:#c4d5f1;"></div>
<div style="left:1790px;top:123px;width:8px;height:1px;background:#a9b6cf;"></div>
<div style="left:1789px;top:126px;width:7px;height:1px;background:#6a768e;"></div>
<div style="left:1788px;top:129px;width:10px;height:10px;background:#b7c7e3;"></div>
<div style="left:1790px;top:133px;width:5px;height:1px;background:#8591ab;"></div>
<div style="left:1806px;top:123px;width:8px;height:1px;background:#a9b6cf;"></div>
<div style="left:1805px;top:126px;width:7px;height:1px;background:#6a768e;"></div>
<div style="left:1804px;top:129px;width:10px;height:10px;background:#8fd3bd;"></div>
<div style="left:1806px;top:133px;width:5px;height:1px;background:#8591ab;"></div>
<div style="left:1822px;top:123px;width:8px;height:1px;background:#a9b6cf;"></div>
<div style="left:1821px;top:126px;width:7px;height:1px;background:#6a768e;"></div>
<div style="left:1820px;top:129px;width:10px;height:10px;background:#b7c7e3;"></div>
<div style="left:1822px;top:133px;width:5px;height:1px;background:#8591ab;"></div>
<div style="left:1837px;top:102px;width:52px;height:58px;background:#c4d5f1;"></div>
<div style="left:1844px;top:123px;width:8px;height:1px;background:#a9b6cf;"></div>
<div style="left:1843px;top:126px;width:7px;height:1px;background:#6a768e;"></div>
<div style="left:1842px;top:129px;width:10px;height:10px;background:#b7c7e3;"></div>
<div style="left:1844px;top:133px;width:5px;height:1px;background:#8591ab;"></div>
<div style="left:1860px;top:123px;width:8px;height:1px;background:#a9b6cf;"></div>
<div style="left:1859px;top:126px;width:7px;height:1px;background:#6a768e;"></div>
<div style="left:1858px;top:129px;width:10px;height:10px;background:#8fd3bd;"></div>
<div style="left:1860px;top:133px;width:5px;height:1px;background:#8591ab;"></div>
<div style="left:1876px;top:123px;width:8px;height:1px;background:#a9b6cf;"></div>
<div style="left:1875px;top:126px;width:7px;height:1px;background:#6a768e;"></div>
<div style="left:1874px;top:129px;width:10px;height:10px;background:#b7c7e3;"></div>
<div style="left:1876px;top:133px;width:5px;height:1px;background:#8591ab;"></div>
<div style="left:1891px;top:102px;width:52px;height:58px;background:#c4d5f1;"></div>
<div style="left:1898px;top:123px;width:8px;height:1px;background:#a9b6cf;"></div>
<div style="left:1897px;top:126px;width:7px;height:1px;background:#6a768e;"></div>
<div style="left:1896px;top:129px;width:10px;height:10px;background:#b7c7e3;"></div>
<div style="left:1898px;top:133px;width:5px;height:1px;background:#8591ab;"></div>
<div style="left:1914px;top:123px;width:8px;height:1px;background:#a9b6cf;"></div>
<div style="left:1913px;top:126px;width:7px;height:1px;background:#6a768e;"></div>
<div style="left:1912px;top:129px;width:10px;height:10px;background:#8fd3bd;"></div>
<div style="left:1914px;top:133px;width:5px;height:1px;background:#8591ab;"></div>
<div style="left:1930px;top:123px;width:8px;height:1px;background:#a9b6cf;"></div>
<div style="left:1929px;top:126px;width:7px;height:1px;background:#6a768e;"></div>
<div style="left:1928px;top:129px;width:10px;height:10px;background:#b7c7e3;"></div>
<div style="left:1930px;top:133px;width:5px;height:1px;background:#8591ab;"></div>
<div style="left:1945px;top:102px;width:52px;height:58px;background:#c4d5f1;"></div>
<div style="left:1952px;top:123px;width:8px;height:1px;background:#a9b6cf;"></div>
<div style="left:1951px;top:126px;width:7px;height:1px;background:#6a768e;"></div>
<div style="left:1950px;top:129px;width:10px;height:10px;background:#b7c7e3;"></div>
<div style="left:1952px;top:133px;width:5px;height:1px;background:#8591ab;"></div>
<div style="left:1968px;top:123px;width:8px;height:1px;background:#a9b6cf;"></div>
<div style="left:1967px;top:126px;width:7px;height:1px;background:#6a768e;"></div>
<div style="left:1966px;top:129px;width:10px;height:10px;background:#b7c7e3;"></div>
<div style="left:1968px;top:133px;width:5px;height:1px;background:#8591ab;"></div>
<div style="left:1984px;top:123px;width:8px;height:1px;background:#a9b6cf;"></div>
<div style="left:1983px;top:126px;width:7px;height:1px;background:#6a768e;"></div>
<div style="left:1982px;top:129px;width:10px;height:10px;background:#b7c7e3;"></div>
<div style="left:1984px;top:133px;width:5px;height:1px;background:#8591ab;"></div>
<div style="left:1999px;top:102px;width:52px;height:58px;background:#c4d5f1;"></div>
<div style="left:2006px;top:123px;width:8px;height:1px;background:#a9b6cf;"></div>
<div style="left:2005px;top:126px;width:7px;height:1px;background:#6a768e;"></div>
<div style="left:2004px;top:129px;width:10px;height:10px;background:#b7c7e3;"></div>
<div style="left:2006px;top:133px;width:5px;height:1px;background:#8591ab;"></div>
<div style="left:2022px;top:123px;width:8px;height:1px;background:#a9b6cf;"></div>
<div style="left:2021px;top:126px;width:7px;height:1px;background:#6a768e;"></div>
<div style="left:2020px;top:129px;width:10px;height:10px;background:#b7c7e3;"></div>
<div style="left:2022px;top:133px;width:5px;height:1px;background:#8591ab;"></div>
<div style="left:2038px;top:123px;width:8px;height:1px;background:#a9b6cf;"></div>
<div style="left:2037px;top:126px;width:7px;height:1px;background:#6a768e;"></div>
<div style="left:2036px;top:129px;width:10px;height:10px;background:#b7c7e3;"></div>
<div style="left:2038px;top:133px;width:5px;height:1px;background:#8591ab;"></div>
<div style="left:2053px;top:102px;width:52px;height:58px;background:#c4d5f1;"></div>
<div style="left:2060px;top:123px;width:8px;height:1px;background:#a9b6cf;"></div>
<div style="left:2059px;top:126px;width:7px;height:1px;background:#6a768e;"></div>
<div style="left:2058px;top:129px;width:10px;height:10px;background:#b7c7e3;"></div>
<div style="left:2060px;top:133px;width:5px;height:1px;background:#8591ab;"></div>
<div style="left:2076px;top:123px;width:8px;height:1px;background:#a9b6cf;"></div>
<div style="left:2075px;top:126px;width:7px;height:1px;background:#6a768e;"></div>
<div style="left:2074px;top:129px;width:10px;height:10px;background:#b7c7e3;"></div>
<div style="left:2076px;top:133px;width:5px;height:1px;background:#8591ab;"></div>
<div style="left:2092px;top:123px;width:8px;height:1px;background:#a9b6cf;"></div>
<div style="left:2091px;top:126px;width:7px;height:1px;background:#6a768e;"></div>
<div style="left:2090px;top:129px;width:10px;height:10px;background:#b7c7e3;"></div>
<div style="left:2092px;top:133px;width:5px;height:1px;background:#8591ab;"></div>
<div style="left:2107px;top:102px;width:52px;height:58px;background:#c4d5f1;"></div>
<div style="left:2114px;top:123px;width:8px;height:1px;background:#a9b6cf;"></div>
<div style="left:2113px;top:126px;width:7px;height:1px;background:#6a768e;"></div>
<div style="left:2112px;top:129px;width:10px;height:10px;background:#b7c7e3;"></div>
<div style="left:2114px;top:133px;width:5px;height:1px;background:#8591ab;"></div>
<div style="left:2130px;top:123px;width:8px;height:1px;background:#a9b6cf;"></div>
<div style="left:2129px;top:126px;width:7px;height:1px;background:#6a768e;"></div>
<div style="left:2128px;top:129px;width:10px;height:10px;background:#b7c7e3;"></div>
<div style="left:2130px;top:133px;width:5px;height:1px;background:#8591ab;"></div>
<div style="left:2146px;top:123px;width:8px;height:1px;background:#a9b6cf;"></div>
<div style="left:2145px;top:126px;width:7px;height:1px;background:#6a768e;"></div>
<div style="left:2144px;top:129px;width:10px;height:10px;background:#b7c7e3;"></div>
<div style="left:2146px;top:133px;width:5px;height:1px;background:#8591ab;"></div>
<div style="left:2161px;top:102px;width:52px;height:58px;background:#c4d5f1;"></div>
<div style="left:2168px;top:123px;width:8px;height:1px;background:#a9b6cf;"></div>
<div style="left:2167px;top:126px;width:7px;height:1px;background:#6a768e;"></div>
<div style="left:2166px;top:129px;width:10px;height:10px;background:#b7c7e3;"></div>
<div style="left:2168px;top:133px;width:5px;height:1px;background:#8591ab;"></div>
<div style="left:2184px;top:123px;width:8px;height:1px;background:#a9b6cf;"></div>
<div style="left:2183px;top:126px;width:7px;height:1px;background:#6a768e;"></div>
<div style="left:2182px;top:129px;width:10px;height:10px;background:#b7c7e3;"></div>
<div style="left:2184px;top:133px;width:5px;height:1px;background:#8591ab;"></div>
<div style="left:2200px;top:123px;width:8px;height:1px;background:#a9b6cf;"></div>
<div style="left:2199px;top:126px;width:7px;height:1px;background:#6a768e;"></div>
<div style="left:2198px;top:129px;width:10px;height:10px;background:#b7c7e3;"></div>
<div style="left:2200px;top:133px;width:5px;height:1px;background:#8591ab;"></div>
<div style="left:2215px;top:102px;width:52px;height:58px;background:#c4d5f1;"></div>
<div style="left:2222px;top:123px;width:8px;height:1px;background:#a9b6cf;"></div>
<div style="left:2221px;top:126px;width:7px;height:1px;background:#6a768e;"></div>
<div style="left:2220px;top:129px;width:10px;height:10px;background:#b7c7e3;"></div>
<div style="left:2222px;top:133px;width:5px;height:1px;background:#8591ab;"></div>
<div style="left:2238px;top:123px;width:8px;height:1px;background:#a9b6cf;"></div>
<div style="left:2237px;top:126px;width:7px;height:1px;background:#6a768e;"></div>
<div style="left:2236px;top:129px;width:10px;height:10px;background:#b7c7e3;"></div>
<div style="left:2238px;top:133px;width:5px;height:1px;background:#8591ab;"></div>
<div style="left:2254px;top:123px;width:8px;height:1px;background:#a9b6cf;"></div>
<div style="left:2253px;top:126px;width:7px;height:1px;background:#6a768e;"></div>
<div style="left:2252px;top:129px;width:10px;height:10px;background:#b7c7e3;"></div>
<div style="left:2254px;top:133px;width:5px;height:1px;background:#8591ab;"></div>
<div style="left:2269px;top:102px;width:52px;height:58px;background:#c4d5f1;"></div>
<div style="left:2276px;top:123px;width:8px;height:1px;background:#a9b6cf;"></div>
<div style="left:2275px;top:126px;width:7px;height:1px;background:#6a768e;"></div>
<div style="left:2274px;top:129px;width:10px;height:10px;background:#b7c7e3;"></div>
<div style="left:2276px;top:133px;width:5px;height:1px;background:#8591ab;"></div>
<div style="left:2292px;top:123px;width:8px;height:1px;background:#a9b6cf;"></div>
<div style="left:2291px;top:126px;width:7px;height:1px;background:#6a768e;"></div>
<div style="left:2290px;top:129px;width:10px;height:10px;background:#b7c7e3;"></div>
<div style="left:2292px;top:133px;width:5px;height:1px;background:#8591ab;"></div>
<div style="left:2308px;top:123px;width:8px;height:1px;background:#a9b6cf;"></div>
<div style="left:2307px;top:126px;width:7px;height:1px;background:#6a768e;"></div>
<div style="left:2306px;top:129px;width:10px;height:10px;background:#b7c7e3;"></div>
<div style="left:2308px;top:133px;width:5px;height:1px;background:#8591ab;"></div>
<div style="left:2323px;top:102px;width:52px;height:58px;background:#c4d5f1;"></div>
<div style="left:2330px;top:123px;width:8px;height:1px;background:#a9b6cf;"></div>
<div style="left:2329px;top:126px;width:7px;height:1px;background:#6a768e;"></div>
<div style="left:2328px;top:129px;width:10px;height:10px;background:#b7c7e3;"></div>
<div style="left:2330px;top:133px;width:5px;height:1px;background:#8591ab;"></div>
<div style="left:2346px;top:123px;width:8px;height:1px;background:#a9b6cf;"></div>
<div style="left:2345px;top:126px;width:7px;height:1px;background:#6a768e;"></div>
<div style="left:2344px;top:129px;width:10px;height:10px;background:#b7c7e3;"></div>
<div style="left:2346px;top:133px;width:5px;height:1px;background:#8591ab;"></div>
<div style="left:2362px;top:123px;width:8px;height:1px;background:#a9b6cf;"></div>
<div style="left:2361px;top:126px;width:7px;height:1px;background:#6a768e;"></div>
<div style="left:2360px;top:129px;width:10px;height:10px;background:#b7c7e3;"></div>
<div style="left:2362px;top:133px;width:5px;height:1px;background:#8591ab;"></div>
<div style="left:2377px;top:102px;width:52px;height:58px;background:#c4d5f1;"></div>
<div style="left:2384px;top:123px;width:8px;height:1px;background:#a9b6cf;"></div>
<div style="left:2383px;top:126px;width:7px;height:1px;background:#6a768e;"></div>
<div style="left:2382px;top:129px;width:10px;height:10px;background:#b7c7e3;"></div>
<div style="left:2384px;top:133px;width:5px;height:1px;background:#8591ab;"></div>
<div style="left:2400px;top:123px;width:8px;height:1px;background:#a9b6cf;"></div>
<div style="left:2399px;top:126px;width:7px;height:1px;background:#6a768e;"></div>
<div style="left:2398px;top:129px;width:10px;height:10px;background:#b7c7e3;"></div>
<div style="left:2400px;top:133px;width:5px;height:1px;background:#8591ab;"></div>
<div style="left:2416px;top:123px;width:8px;height:1px;background:#a9b6cf;"></div>
<div style="left:2415px;top:126px;width:7px;height:1px;background:#6a768e;"></div>
<div style="left:2414px;top:129px;width:10px;height:10px;background:#b7c7e3;"></div>
<div style="left:2416px;top:133px;width:5px;height:1px;background:#8591ab;"></div>
<div style="left:2431px;top:102px;width:52px;height:58px;background:#c4d5f1;"></div>
<div style="left:2438px;top:123px;width:8px;height:1px;background:#a9b6cf;"></div>
<div style="left:2437px;top:126px;width:7px;height:1px;background:#6a768e;"></div>
<div style="left:2436px;top:129px;width:10px;height:10px;background:#b7c7e3;"></div>
<div style="left:2438px;top:133px;width:5px;height:1px;background:#8591ab;"></div>
<div style="left:2454px;top:123px;width:8px;height:1px;background:#a9b6cf;"></div>
<div style="left:2453px;top:126px;width:7px;height:1px;background:#6a768e;"></div>
<div style="left:2452px;top:129px;width:10px;height:10px;background:#b7c7e3;"></div>
<div style="left:2454px;top:133px;width:5px;height:1px;background:#8591ab;"></div>
<div style="left:2470px;top:123px;width:8px;height:1px;background:#a9b6cf;"></div>
<div style="left:2469px;top:126px;width:7px;height:1px;background:#6a768e;"></div>
<div style="left:2468px;top:129px;width:10px;height:10px;background:#b7c7e3;"></div>
<div style="left:2470px;top:133px;width:5px;height:1px;background:#8591ab;"></div>
<div style="left:2485px;top:102px;width:52px;height:58px;background:#c4d5f1;"></div>
<div style="left:2492px;top:123px;width:8px;height:1px;background:#a9b6cf;"></div>
<div style="left:2491px;top:126px;width:7px;height:1px;background:#6a768e;"></div>
<div style="left:2490px;top:129px;width:10px;height:10px;background:#b7c7e3;"></div>
<div style="left:2492px;top:133px;width:5px;height:1px;background:#8591ab;"></div>
<div style="left:2508px;top:123px;width:8px;height:1px;background:#a9b6cf;"></div>
<div style="left:2507px;top:126px;width:7px;height:1px;background:#6a768e;"></div>
<div style="left:2506px;top:129px;width:10px;height:10px;background:#b7c7e3;"></div>
<div style="left:2508px;top:133px;width:5px;height:1px;background:#8591ab;"></div>
<div style="left:2524px;top:123px;width:8px;height:1px;background:#a9b6cf;"></div>
<div style="left:2523px;top:126px;width:7px;height:1px;background:#6a768e;"></div>
<div style="left:2522px;top:129px;width:10px;height:10px;background:#b7c7e3;"></div>
<div style="left:2524px;top:133px;width:5px;height:1px;background:#8591ab;"></div>
<div style="left:2539px;top:102px;width:9px;height:58px;background:#c4d5f1;"></div>
<div style="left:1069px;top:102px;width:10px;height:58px;background:#f2f2f2;"></div>
<div style="left:1079px;top:102px;width:2px;height:58px;background:#222;"></div>
<div style="left:1081px;top:102px;width:2px;height:58px;background:#f2f2f2;"></div>
<div style="left:1065px;top:36px;width:4px;height:126px;background:#3a7dbd;"></div>
<div style="left:1083px;top:36px;width:4px;height:126px;background:#3a7dbd;"></div>
<div style="left:1059px;top:0px;width:13px;height:34px;background:#1e4a78;border:2px solid #3a7ebf;border-radius:7px;border-top-left-radius:6px"></div>
<div style="left:1065px;top:12px;width:2px;height:14px;background:#c3d5fb;"></div>
<div style="left:1071px;top:12px;width:2px;height:14px;background:#c3d5fb;"></div>
<div style="left:1073px;top:0px;width:16px;height:34px;background:#1e4a78;border:2px solid #3a7ebf;border-radius:7px"></div>
<div style="left:1079px;top:12px;width:2px;height:14px;background:#c3d5fb;"></div>
<div style="left:1085px;top:12px;width:2px;height:14px;background:#c3d5fb;"></div>
<div style="left:0px;top:160px;width:2548px;height:2px;background:#2d3e5d;"></div>
<div style="left:0px;top:162px;width:2548px;height:2px;background:#5f5d5b;"></div>
<div style="left:0px;top:164px;width:2548px;height:822px;background:#282828;"></div>
<div style="left:0px;top:164px;width:2526px;height:2px;background:#aac6f3;"></div>
<div style="left:0px;top:166px;width:2526px;height:30px;background:#212121;"></div>
<div style="left:0px;top:196px;width:2526px;height:4px;background:#2a2a2a;"></div>
<div style="left:0px;top:200px;width:2526px;height:782px;background:#282828;"></div>
<div style="left:12px;top:200px;width:2513px;height:34px;background:#ffffff;"></div>
<div style="left:2525px;top:200px;width:1px;height:34px;background:#161616;"></div>
<div style="left:12px;top:234px;width:2514px;height:1px;background:#1e1e1e;"></div>
<div style="left:12px;top:235px;width:2514px;height:2px;background:#3a3a3a;"></div>
<div style="left:36px;top:166px;width:2px;height:34px;background:#2e3036;"></div>
<div style="left:36px;top:200px;width:2px;height:34px;background:#f1f3fb;"></div>
<div style="left:36px;top:234px;width:2px;height:748px;background:#313339;"></div>
<div style="left:264px;top:166px;width:2px;height:34px;background:#2e3036;"></div>
<div style="left:264px;top:200px;width:2px;height:34px;background:#f1f3fb;"></div>
<div style="left:264px;top:234px;width:2px;height:748px;background:#313339;"></div>
<div style="left:492px;top:166px;width:2px;height:34px;background:#2e3036;"></div>
<div style="left:492px;top:200px;width:2px;height:34px;background:#f1f3fb;"></div>
<div style="left:492px;top:234px;width:2px;height:748px;background:#313339;"></div>
<div style="left:720px;top:166px;width:2px;height:34px;background:#2e3036;"></div>
<div style="left:720px;top:200px;width:2px;height:34px;background:#f1f3fb;"></div>
<div style="left:720px;top:234px;width:2px;height:748px;background:#313339;"></div>
<div style="left:948px;top:166px;width:2px;height:34px;background:#2e3036;"></div>
<div style="left:948px;top:200px;width:2px;height:34px;background:#f1f3fb;"></div>
<div style="left:948px;top:234px;width:2px;height:748px;background:#313339;"></div>
<div style="left:1176px;top:166px;width:2px;height:34px;background:#2e3036;"></div>
<div style="left:1176px;top:200px;width:2px;height:34px;background:#f1f3fb;"></div>
<div style="left:1176px;top:234px;width:2px;height:748px;background:#313339;"></div>
<div style="left:1404px;top:166px;width:2px;height:34px;background:#2e3036;"></div>
<div style="left:1404px;top:200px;width:2px;height:34px;background:#f1f3fb;"></div>
<div style="left:1404px;top:234px;width:2px;height:748px;background:#313339;"></div>
<div style="left:1632px;top:166px;width:2px;height:34px;background:#2e3036;"></div>
<div style="left:1632px;top:200px;width:2px;height:34px;background:#f1f3fb;"></div>
<div style="left:1632px;top:234px;width:2px;height:748px;background:#313339;"></div>
<div style="left:1860px;top:166px;width:2px;height:34px;background:#2e3036;"></div>
<div style="left:1860px;top:200px;width:2px;height:34px;background:#f1f3fb;"></div>
<div style="left:1860px;top:234px;width:2px;height:748px;background:#313339;"></div>
<div style="left:2088px;top:166px;width:2px;height:34px;background:#2e3036;"></div>
<div style="left:2088px;top:200px;width:2px;height:34px;background:#f1f3fb;"></div>
<div style="left:2088px;top:234px;width:2px;height:748px;background:#313339;"></div>
<div style="left:2316px;top:166px;width:2px;height:34px;background:#2e3036;"></div>
<div style="left:2316px;top:200px;width:2px;height:34px;background:#f1f3fb;"></div>
<div style="left:2316px;top:234px;width:2px;height:748px;background:#313339;"></div>
<div style="left:0;top:166px;width:2526px;height:34px;overflow:hidden">
<span style="right:2499px;top:5.68px;font-size:22px;line-height:22px;color:#e3e3e3;text-align:right;letter-spacing:-0.12px">1,197.0 ms</span>
<span style="right:2271px;top:5.68px;font-size:22px;line-height:22px;color:#e3e3e3;text-align:right;letter-spacing:-0.12px">1,197.2 ms</span>
<span style="right:2043px;top:5.68px;font-size:22px;line-height:22px;color:#e3e3e3;text-align:right;letter-spacing:-0.12px">1,197.4 ms</span>
<span style="right:1815px;top:5.68px;font-size:22px;line-height:22px;color:#e3e3e3;text-align:right;letter-spacing:-0.12px">1,197.6 ms</span>
<span style="right:1587px;top:5.68px;font-size:22px;line-height:22px;color:#e3e3e3;text-align:right;letter-spacing:-0.12px">1,197.8 ms</span>
<span style="right:1359px;top:5.68px;font-size:22px;line-height:22px;color:#e3e3e3;text-align:right;letter-spacing:0.25px">1,198.0 ms</span>
<span style="right:1131px;top:5.68px;font-size:22px;line-height:22px;color:#e3e3e3;text-align:right;letter-spacing:0.25px">1,198.2 ms</span>
<span style="right:903px;top:5.68px;font-size:22px;line-height:22px;color:#e3e3e3;text-align:right;letter-spacing:0.25px">1,198.4 ms</span>
<span style="right:675px;top:5.68px;font-size:22px;line-height:22px;color:#e3e3e3;text-align:right;letter-spacing:0.25px">1,198.6 ms</span>
<span style="right:447px;top:5.68px;font-size:22px;line-height:22px;color:#e3e3e3;text-align:right;letter-spacing:0.25px">1,198.8 ms</span>
<span style="right:219px;top:5.68px;font-size:22px;line-height:22px;color:#e3e3e3;text-align:right;letter-spacing:0.25px">1,199.0 ms</span>
<span style="right:-9px;top:5.68px;font-size:22px;line-height:22px;color:#e3e3e3;text-align:right;letter-spacing:0.25px">1,199.2 ms</span>
</div>
<div style="left:12px;top:204px;width:105px;height:25.5px;background:#575757;"></div>
<svg style="left:14px;top:207px" width="14" height="17" viewBox="0 0 14 17"><path d="M0,0 L14,8.5 L0,17 Z" fill="#8f8f8f"/></svg>
<span style="top:205.08px;font-size:22px;line-height:22px;color:#ebebeb;letter-spacing:0.35px;left:34px;">Frames</span>
<span style="top:207.38px;font-size:22px;line-height:22px;color:#303030;letter-spacing:0.9px;left:1214px;">949.0 ms</span>
<div style="left:12px;top:379px;width:2514px;height:2px;background:#3a3a3a;"></div>
<div style="left:12px;top:455px;width:2514px;height:2px;background:#3a3a3a;"></div>
<div style="left:12px;top:497px;width:2514px;height:2px;background:#3a3a3a;"></div>
<div style="left:12px;top:238px;width:8px;height:4px;background:#3b6ad0;"></div>
<div style="left:12px;top:377px;width:8px;height:4px;background:#3b6ad0;"></div>
<svg style="left:12.5px;top:251.5px" width="16" height="14" viewBox="0 0 16 14"><path d="M0,0 L16,0 L8,14 Z" fill="#8f8f8f"/></svg>
<span style="top:246.98px;font-size:22px;line-height:22px;color:#e3e3e3;letter-spacing:0.75px;left:35px;">Main — file:///Users/seongjinkang/workspace/personal_lab/web-render-test/index.html</span>
<svg style="left:12.5px;top:395px" width="16" height="14" viewBox="0 0 16 14"><path d="M0,0 L16,0 L8,14 Z" fill="#8f8f8f"/></svg>
<span style="top:390.38px;font-size:22px;line-height:22px;color:#e3e3e3;letter-spacing:0.65px;left:35px;">Thread pool</span>
<span style="top:424.18px;font-size:22px;line-height:22px;color:#e3e3e3;letter-spacing:0.45px;left:55px;">Thread pool worker 1</span>
<span style="top:465.98px;font-size:22px;line-height:22px;color:#e3e3e3;letter-spacing:-0.45px;left:35px;">GPU</span>
<div style="left:238px;top:274px;width:1760px;height:26px;background:#6b7c99;border:4px solid #aecbfa"></div>
<span style="top:280.38px;font-size:22px;line-height:22px;color:#4c5e7c;letter-spacing:0.3px;left:248px;">Task</span>
<div style="left:2008px;top:275px;width:1px;height:32px;background:#7a7a7a;"></div>
<div style="left:2010px;top:275px;width:1px;height:32px;background:#7a7a7a;"></div>
<div style="left:2012px;top:275px;width:1px;height:32px;background:#7a7a7a;"></div>
<div style="left:2014px;top:275px;width:1px;height:32px;background:#7a7a7a;"></div>
<div style="left:260px;top:309px;width:1px;height:32px;background:#b46cf5;"></div>
<div style="left:262px;top:309px;width:1px;height:32px;background:#b46cf5;"></div>
<div style="left:270px;top:309px;width:1px;height:32px;background:#b46cf5;"></div>
<div style="left:276px;top:309px;width:73px;height:32px;background:#b46cf5;"></div>
<span style="top:314.58px;font-size:22px;line-height:22px;color:#1f1f1f;letter-spacing:0.2px;left:285.5px;">R<span class="e">...</span>e</span>
<div style="left:362px;top:309px;width:1px;height:32px;background:#e8b530;"></div>
<div style="left:368px;top:309px;width:1px;height:32px;background:#e8b530;"></div>
<div style="left:370px;top:309px;width:1px;height:32px;background:#e8b530;"></div>
<div style="left:382px;top:309px;width:23px;height:32px;background:#b46cf5;"></div>
<div style="left:416px;top:309px;width:51px;height:32px;background:#65bd6c;"></div>
<span style="top:314.58px;font-size:22px;line-height:22px;color:#1f1f1f;letter-spacing:0.2px;left:425.5px;">P<span class="e">...</span></span>
<div style="left:480px;top:309px;width:5px;height:32px;background:#b46cf5;"></div>
<div style="left:490px;top:309px;width:1513px;height:32px;background:#65bd6c;"></div>
<span style="top:314.58px;font-size:22px;line-height:22px;color:#1f1f1f;letter-spacing:0.5px;left:500px;">Commit</span>
<div style="left:434px;top:343px;width:31px;height:32px;background:#65bd6c;"></div>
<div style="left:594px;top:419px;width:125px;height:32px;background:#65bd6c;"></div>
<span style="top:425.38px;font-size:22px;line-height:22px;color:#1f1f1f;letter-spacing:0.7px;left:603.5px;">Rast<span class="e">...</span>aint</span>
<div style="left:726px;top:419px;width:165px;height:32px;background:#65bd6c;"></div>
<span style="top:425.38px;font-size:22px;line-height:22px;color:#1f1f1f;letter-spacing:0.7px;left:735.5px;">Raster<span class="e">...</span> paint</span>
<div style="left:710px;top:461px;width:5px;height:31px;background:#65bd6c;"></div>
<div style="left:720px;top:461px;width:1px;height:31px;background:#65bd6c;"></div>
<div style="left:734px;top:461px;width:1px;height:31px;background:#65bd6c;"></div>
<div style="left:792px;top:461px;width:5px;height:31px;background:#65bd6c;"></div>
<div style="left:1196px;top:461px;width:247px;height:31px;background:#65bd6c;"></div>
<span style="top:465.88px;font-size:22px;line-height:22px;color:#1f1f1f;letter-spacing:-0.3px;left:1206px;">GPU</span>
<div style="left:1548px;top:461px;width:287px;height:31px;background:#65bd6c;"></div>
<span style="top:465.88px;font-size:22px;line-height:22px;color:#1f1f1f;letter-spacing:-0.3px;left:1558px;">GPU</span>
<div style="left:37px;top:274px;width:1px;height:225px;background:rgba(120,130,150,0.25);"></div>
<div style="left:265px;top:274px;width:1px;height:225px;background:rgba(120,130,150,0.25);"></div>
<div style="left:493px;top:274px;width:1px;height:225px;background:rgba(120,130,150,0.25);"></div>
<div style="left:721px;top:274px;width:1px;height:225px;background:rgba(120,130,150,0.25);"></div>
<div style="left:949px;top:274px;width:1px;height:225px;background:rgba(120,130,150,0.25);"></div>
<div style="left:1177px;top:274px;width:1px;height:225px;background:rgba(120,130,150,0.25);"></div>
<div style="left:1405px;top:274px;width:1px;height:225px;background:rgba(120,130,150,0.25);"></div>
<div style="left:1633px;top:274px;width:1px;height:225px;background:rgba(120,130,150,0.25);"></div>
<div style="left:1861px;top:274px;width:1px;height:225px;background:rgba(120,130,150,0.25);"></div>
<div style="left:2089px;top:274px;width:1px;height:225px;background:rgba(120,130,150,0.25);"></div>
<div style="left:2317px;top:274px;width:1px;height:225px;background:rgba(120,130,150,0.25);"></div>
<div style="left:0px;top:982px;width:2526px;height:2px;background:#b4cdf5;"></div>
<div style="left:0px;top:984px;width:2548px;height:2px;background:#5e5e5e;"></div>
<div style="left:0px;top:163px;width:2px;height:819px;background:#cf3b8b;"></div>
<div style="left:0px;top:519px;width:4px;height:465px;background:#cf3b8b;"></div>
<div style="left:0px;top:986px;width:2548px;height:52px;background:#3c3c3c;"></div>
<div style="left:0px;top:1038px;width:2548px;height:2px;background:#5e5e5e;"></div>
<span style="top:1003.28px;font-size:24px;line-height:24px;color:#d3d3d3;letter-spacing:0.6px;left:20px;">Summary</span>
<span style="top:1003.28px;font-size:24px;line-height:24px;color:#d3d3d3;letter-spacing:1.6px;left:171px;">Bottom-up</span>
<span style="top:1002.68px;font-size:24px;line-height:24px;color:#d3d3d3;letter-spacing:0.6px;left:337px;">Call tree</span>
<span style="top:1002.68px;font-size:24px;line-height:24px;color:#a8c7fa;letter-spacing:0.6px;left:476px;">Event log</span>
<div style="left:454px;top:1035px;width:148px;height:5px;background:#a8c7fa;border-radius:4px 4px 0 0"></div>
<div style="left:0px;top:1040px;width:2146px;height:750px;background:#1f1f1f;"></div>
<div style="left:2146px;top:1040px;width:4px;height:750px;background:#5e5e5e;"></div>
<div style="left:2150px;top:1040px;width:398px;height:750px;background:#282828;"></div>
<div style="left:0px;top:1040px;width:2px;height:750px;background:#5e5e5e;"></div>
<div style="left:2px;top:1040px;width:2144px;height:53px;background:#262626;"></div>
<div style="left:2px;top:1093px;width:2144px;height:3px;background:#5e5e5e;"></div>
<span style="top:1055.88px;font-size:22px;line-height:22px;color:#d0d0d0;letter-spacing:0.3px;font-weight:700;left:18px;">Aa</span>
<svg style="left:66px;top:1050px" width="44" height="32" viewBox="0 0 44 32"><g fill="none" stroke="#d2d2d2" stroke-width="2.6" stroke-linecap="round"><path d="M11.5,5.5 C7,11 7,21 11.5,26.5"/><path d="M32.5,5.5 C37,11 37,21 32.5,26.5"/><path d="M24.5,7 L24.5,17 M20.2,9.5 L28.8,14.5 M20.2,14.5 L28.8,9.5" stroke-width="2.4"/></g><circle cx="17.8" cy="23.8" r="2.3" fill="#d2d2d2"/></svg>
<span style="top:1052.42px;font-size:21px;line-height:21px;color:#d2d2d2;letter-spacing:-0.2px;font-weight:700;left:131.5px;">ab</span>
<svg style="left:126px;top:1067.5px" width="36" height="10" viewBox="0 0 36 10"><path d="M2.3,0 L2.3,7 L33.7,7 L33.7,0" fill="none" stroke="#d2d2d2" stroke-width="2.6"/></svg>
<div style="left:178px;top:1046px;width:239px;height:40px;background:#3b3b3b;border-radius:20px"></div>
<svg style="left:199px;top:1055px" width="22" height="22" viewBox="0 0 22 22"><path d="M3,2.5 L19.5,2.5 L11.2,12 Z" fill="none" stroke="#cfcfcf" stroke-width="2.4" stroke-linejoin="miter"/><rect x="10" y="11" width="2.5" height="9.6" fill="#cfcfcf"/></svg>
<span style="top:1054.68px;font-size:24px;line-height:24px;color:#c8c8c8;letter-spacing:0.4px;left:234.8px;">Filter</span>
<span style="top:1054.68px;font-size:24px;line-height:24px;color:#e0e0e0;letter-spacing:0.5px;left:441px;">All</span>
<svg style="left:541px;top:1062px" width="16" height="9" viewBox="0 0 16 9"><path d="M0,0 L16,0 L8,9 Z" fill="#9a9a9a"/></svg>
<div style="left:581px;top:1054px;width:20px;height:20px;background:#3a3a3a;border:2px solid #8c8c8c;border-radius:4px"></div>
<span style="top:1054.68px;font-size:24px;line-height:24px;color:#e0e0e0;letter-spacing:0.6px;left:618px;">Loading</span>
<div style="left:729px;top:1054px;width:20px;height:20px;background:#3a3a3a;border:2px solid #8c8c8c;border-radius:4px"></div>
<span style="top:1054.68px;font-size:24px;line-height:24px;color:#e0e0e0;letter-spacing:0.5px;left:766px;">Messaging</span>
<div style="left:909px;top:1054px;width:20px;height:20px;background:#3a3a3a;border:2px solid #8c8c8c;border-radius:4px"></div>
<span style="top:1054.68px;font-size:24px;line-height:24px;color:#e0e0e0;letter-spacing:0.8px;left:945.5px;">Scripting</span>
<div style="left:1069px;top:1054px;width:24px;height:24px;background:#88adf1;border-radius:4px"></div>
<svg style="left:1069px;top:1054px" width="24" height="24" viewBox="0 0 24 24"><path d="M4.4,13.2 L9.6,18.2 L19.4,5.6" fill="none" stroke="#333333" stroke-width="3.6"/></svg>
<span style="top:1054.68px;font-size:24px;line-height:24px;color:#e0e0e0;letter-spacing:0.5px;left:1105px;">Rendering</span>
<div style="left:1242px;top:1054px;width:24px;height:24px;background:#88adf1;border-radius:4px"></div>
<svg style="left:1242px;top:1054px" width="24" height="24" viewBox="0 0 24 24"><path d="M4.4,13.2 L9.6,18.2 L19.4,5.6" fill="none" stroke="#333333" stroke-width="3.6"/></svg>
<span style="top:1054.68px;font-size:24px;line-height:24px;color:#e0e0e0;letter-spacing:0.5px;left:1278px;">Painting</span>
<div style="left:2px;top:1096px;width:2144px;height:40px;background:#27282b;"></div>
<div style="left:2px;top:1136px;width:2144px;height:2px;background:#5e5e5e;"></div>
<span style="top:1104.18px;font-size:24px;line-height:24px;color:#e3e3e3;letter-spacing:0.8px;left:11px;">Start time</span>
<svg style="left:133px;top:1110px" width="15" height="12" viewBox="0 0 15 12"><path d="M0,12 L7.5,0 L15,12 Z" fill="#c4c4c4"/></svg>
<span style="top:1104.18px;font-size:24px;line-height:24px;color:#e3e3e3;letter-spacing:0.6px;left:172px;">Self time</span>
<span style="top:1104.18px;font-size:24px;line-height:24px;color:#e3e3e3;letter-spacing:0.8px;left:332.5px;">Total time</span>
<span style="top:1104.68px;font-size:24px;line-height:24px;color:#e3e3e3;letter-spacing:0.9px;left:492.5px;">Activity</span>
<div style="left:2px;top:1138px;width:2144px;height:40px;background:#3c3c3c;"></div>
<span style="top:1146.98px;font-size:24px;line-height:24px;color:#e3e3e3;letter-spacing:-0.3px;right:2394.5px;text-align:right;">1,197.2 ms</span>
<span style="top:1146.98px;font-size:24px;line-height:24px;color:#e3e3e3;letter-spacing:-0.1px;right:2234.5px;text-align:right;">0.0 ms</span>
<span style="top:1146.98px;font-size:24px;line-height:24px;color:#e3e3e3;letter-spacing:-0.1px;right:2074.5px;text-align:right;">0.0 ms</span>
<div style="left:526px;top:1146px;width:24px;height:24px;background:#b46cf5;"></div>
<span style="top:1147.08px;font-size:24px;line-height:24px;color:#e3e3e3;letter-spacing:0.69px;left:561.8px;">Pre-paint</span>
<div style="left:2px;top:1178px;width:2144px;height:40px;background:#1f1f1f;"></div>
<span style="top:1186.98px;font-size:24px;line-height:24px;color:#e3e3e3;letter-spacing:-0.3px;right:2394.5px;text-align:right;">1,197.2 ms</span>
<span style="top:1186.98px;font-size:24px;line-height:24px;color:#e3e3e3;letter-spacing:-0.1px;right:2234.5px;text-align:right;">0.0 ms</span>
<span style="top:1186.98px;font-size:24px;line-height:24px;color:#e3e3e3;letter-spacing:-0.1px;right:2074.5px;text-align:right;">0.0 ms</span>
<div style="left:526px;top:1186px;width:24px;height:24px;background:#b46cf5;"></div>
<span style="top:1187.08px;font-size:24px;line-height:24px;color:#e3e3e3;letter-spacing:0.69px;left:561.8px;">Hit test</span>
<div style="left:2px;top:1218px;width:2144px;height:40px;background:#28292c;"></div>
<span style="top:1226.98px;font-size:24px;line-height:24px;color:#e3e3e3;letter-spacing:-0.3px;right:2394.5px;text-align:right;">1,197.2 ms</span>
<span style="top:1226.98px;font-size:24px;line-height:24px;color:#e3e3e3;letter-spacing:-0.1px;right:2234.5px;text-align:right;">0.0 ms</span>
<span style="top:1226.98px;font-size:24px;line-height:24px;color:#e3e3e3;letter-spacing:-0.1px;right:2074.5px;text-align:right;">0.0 ms</span>
<div style="left:526px;top:1226px;width:24px;height:24px;background:#b46cf5;"></div>
<span style="top:1227.08px;font-size:24px;line-height:24px;color:#e3e3e3;letter-spacing:0.69px;left:561.8px;">Schedule style recalculation</span>
<div style="left:2px;top:1258px;width:2144px;height:40px;background:#1f1f1f;"></div>
<div style="left:315px;top:1258px;width:7px;height:36px;background:#433a28;"></div>
<div style="left:315px;top:1292px;width:7px;height:2px;background:#b57d22;"></div>
<div style="left:475px;top:1258px;width:7px;height:36px;background:#433a28;"></div>
<div style="left:475px;top:1292px;width:7px;height:2px;background:#b57d22;"></div>
<span style="top:1266.98px;font-size:24px;line-height:24px;color:#e3e3e3;letter-spacing:-0.3px;right:2394.5px;text-align:right;">1,197.2 ms</span>
<span style="top:1266.98px;font-size:24px;line-height:24px;color:#e3e3e3;letter-spacing:-0.1px;right:2234.5px;text-align:right;">0.1 ms</span>
<span style="top:1266.98px;font-size:24px;line-height:24px;color:#e3e3e3;letter-spacing:-0.1px;right:2074.5px;text-align:right;">0.1 ms</span>
<div style="left:526px;top:1266px;width:24px;height:24px;background:#b46cf5;"></div>
<span style="top:1267.08px;font-size:24px;line-height:24px;color:#e3e3e3;letter-spacing:0.69px;left:561.8px;">Recalculate style</span>
<div style="left:2px;top:1298px;width:2144px;height:40px;background:#28292c;"></div>
<div style="left:320px;top:1298px;width:2px;height:36px;background:#433a28;"></div>
<div style="left:320px;top:1332px;width:2px;height:2px;background:#b57d22;"></div>
<div style="left:480px;top:1298px;width:2px;height:36px;background:#433a28;"></div>
<div style="left:480px;top:1332px;width:2px;height:2px;background:#b57d22;"></div>
<span style="top:1306.98px;font-size:24px;line-height:24px;color:#e3e3e3;letter-spacing:-0.3px;right:2394.5px;text-align:right;">1,197.3 ms</span>
<span style="top:1306.98px;font-size:24px;line-height:24px;color:#e3e3e3;letter-spacing:-0.1px;right:2234.5px;text-align:right;">0.0 ms</span>
<span style="top:1306.98px;font-size:24px;line-height:24px;color:#e3e3e3;letter-spacing:-0.1px;right:2074.5px;text-align:right;">0.0 ms</span>
<div style="left:526px;top:1306px;width:24px;height:24px;background:#b46cf5;"></div>
<span style="top:1307.08px;font-size:24px;line-height:24px;color:#e3e3e3;letter-spacing:0.69px;left:561.8px;">Pre-paint</span>
<div style="left:2px;top:1338px;width:2144px;height:40px;background:#1f1f1f;"></div>
<div style="left:320px;top:1338px;width:2px;height:36px;background:#433a28;"></div>
<div style="left:320px;top:1372px;width:2px;height:2px;background:#b57d22;"></div>
<div style="left:477px;top:1338px;width:5px;height:36px;background:#433a28;"></div>
<div style="left:477px;top:1372px;width:5px;height:2px;background:#b57d22;"></div>
<span style="top:1346.98px;font-size:24px;line-height:24px;color:#e3e3e3;letter-spacing:-0.3px;right:2394.5px;text-align:right;">1,197.3 ms</span>
<span style="top:1346.98px;font-size:24px;line-height:24px;color:#e3e3e3;letter-spacing:-0.1px;right:2234.5px;text-align:right;">0.0 ms</span>
<span style="top:1346.98px;font-size:24px;line-height:24px;color:#e3e3e3;letter-spacing:-0.1px;right:2074.5px;text-align:right;">0.0 ms</span>
<div style="left:526px;top:1346px;width:24px;height:24px;background:#65bd6c;"></div>
<span style="top:1347.08px;font-size:24px;line-height:24px;color:#e3e3e3;letter-spacing:0.69px;left:561.8px;">Paint</span>
<svg style="left:499px;top:1350px" width="12" height="15" viewBox="0 0 12 15"><path d="M0,0 L12,7.5 L0,15 Z" fill="#c4c4c4"/></svg>
<div style="left:2px;top:1378px;width:2144px;height:40px;background:#28292c;"></div>
<div style="left:321px;top:1378px;width:1px;height:36px;background:#433a28;"></div>
<div style="left:321px;top:1412px;width:1px;height:2px;background:#b57d22;"></div>
<div style="left:481px;top:1378px;width:1px;height:36px;background:#433a28;"></div>
<div style="left:481px;top:1412px;width:1px;height:2px;background:#b57d22;"></div>
<span style="top:1386.98px;font-size:24px;line-height:24px;color:#e3e3e3;letter-spacing:-0.3px;right:2394.5px;text-align:right;">1,197.4 ms</span>
<span style="top:1386.98px;font-size:24px;line-height:24px;color:#e3e3e3;letter-spacing:-0.1px;right:2234.5px;text-align:right;">0.0 ms</span>
<span style="top:1386.98px;font-size:24px;line-height:24px;color:#e3e3e3;letter-spacing:-0.1px;right:2074.5px;text-align:right;">0.0 ms</span>
<div style="left:526px;top:1386px;width:24px;height:24px;background:#b46cf5;"></div>
<span style="top:1387.08px;font-size:24px;line-height:24px;color:#e3e3e3;letter-spacing:0.69px;left:561.8px;">Layerize</span>
<div style="left:2px;top:1418px;width:2144px;height:40px;background:#5a4413;"></div>
<div style="left:168px;top:1418px;width:154px;height:36px;background:#433a28;"></div>
<div style="left:168px;top:1452px;width:154px;height:2px;background:#b57d22;"></div>
<div style="left:328px;top:1418px;width:154px;height:36px;background:#433a28;"></div>
<div style="left:328px;top:1452px;width:154px;height:2px;background:#b57d22;"></div>
<span style="top:1426.98px;font-size:24px;line-height:24px;color:#e3e3e3;letter-spacing:-0.3px;right:2394.5px;text-align:right;">1,197.4 ms</span>
<span style="top:1426.98px;font-size:24px;line-height:24px;color:#e3e3e3;letter-spacing:-0.1px;right:2234.5px;text-align:right;">1.3 ms</span>
<span style="top:1426.98px;font-size:24px;line-height:24px;color:#e3e3e3;letter-spacing:-0.1px;right:2074.5px;text-align:right;">1.3 ms</span>
<div style="left:526px;top:1426px;width:24px;height:24px;background:#65bd6c;"></div>
<span style="top:1427.08px;font-size:24px;line-height:24px;color:#e3e3e3;letter-spacing:0.69px;left:561.8px;">Commit</span>
<div style="left:162px;top:1096px;width:2px;height:694px;background:#5e5e5e;"></div>
<div style="left:322px;top:1096px;width:2px;height:694px;background:#5e5e5e;"></div>
<div style="left:482px;top:1096px;width:2px;height:694px;background:#5e5e5e;"></div>
<div style="left:0px;top:1788px;width:2146px;height:2px;background:#5e5e5e;"></div>
<span style="top:1404.18px;font-size:24px;line-height:24px;color:#e3e3e3;letter-spacing:0.8px;left:2221.5px;">Select item for details.</span>
<div style="left:2px;top:151px;width:2094px;height:10px;background:#e9402a;"></div>
<div style="left:2px;top:509px;width:2094px;height:10px;background:#e9402a;"></div>
<div style="left:2px;top:151px;width:10px;height:368px;background:#e9402a;"></div>
<div style="left:2086px;top:151px;width:10px;height:368px;background:#e9402a;"></div>
<div style="left:2px;top:986px;width:2158px;height:10px;background:#e9402a;"></div>
<div style="left:2px;top:1460px;width:2158px;height:10px;background:#e9402a;"></div>
<div style="left:2px;top:986px;width:10px;height:484px;background:#e9402a;"></div>
<div style="left:2150px;top:986px;width:10px;height:484px;background:#e9402a;"></div>
</body></html>
